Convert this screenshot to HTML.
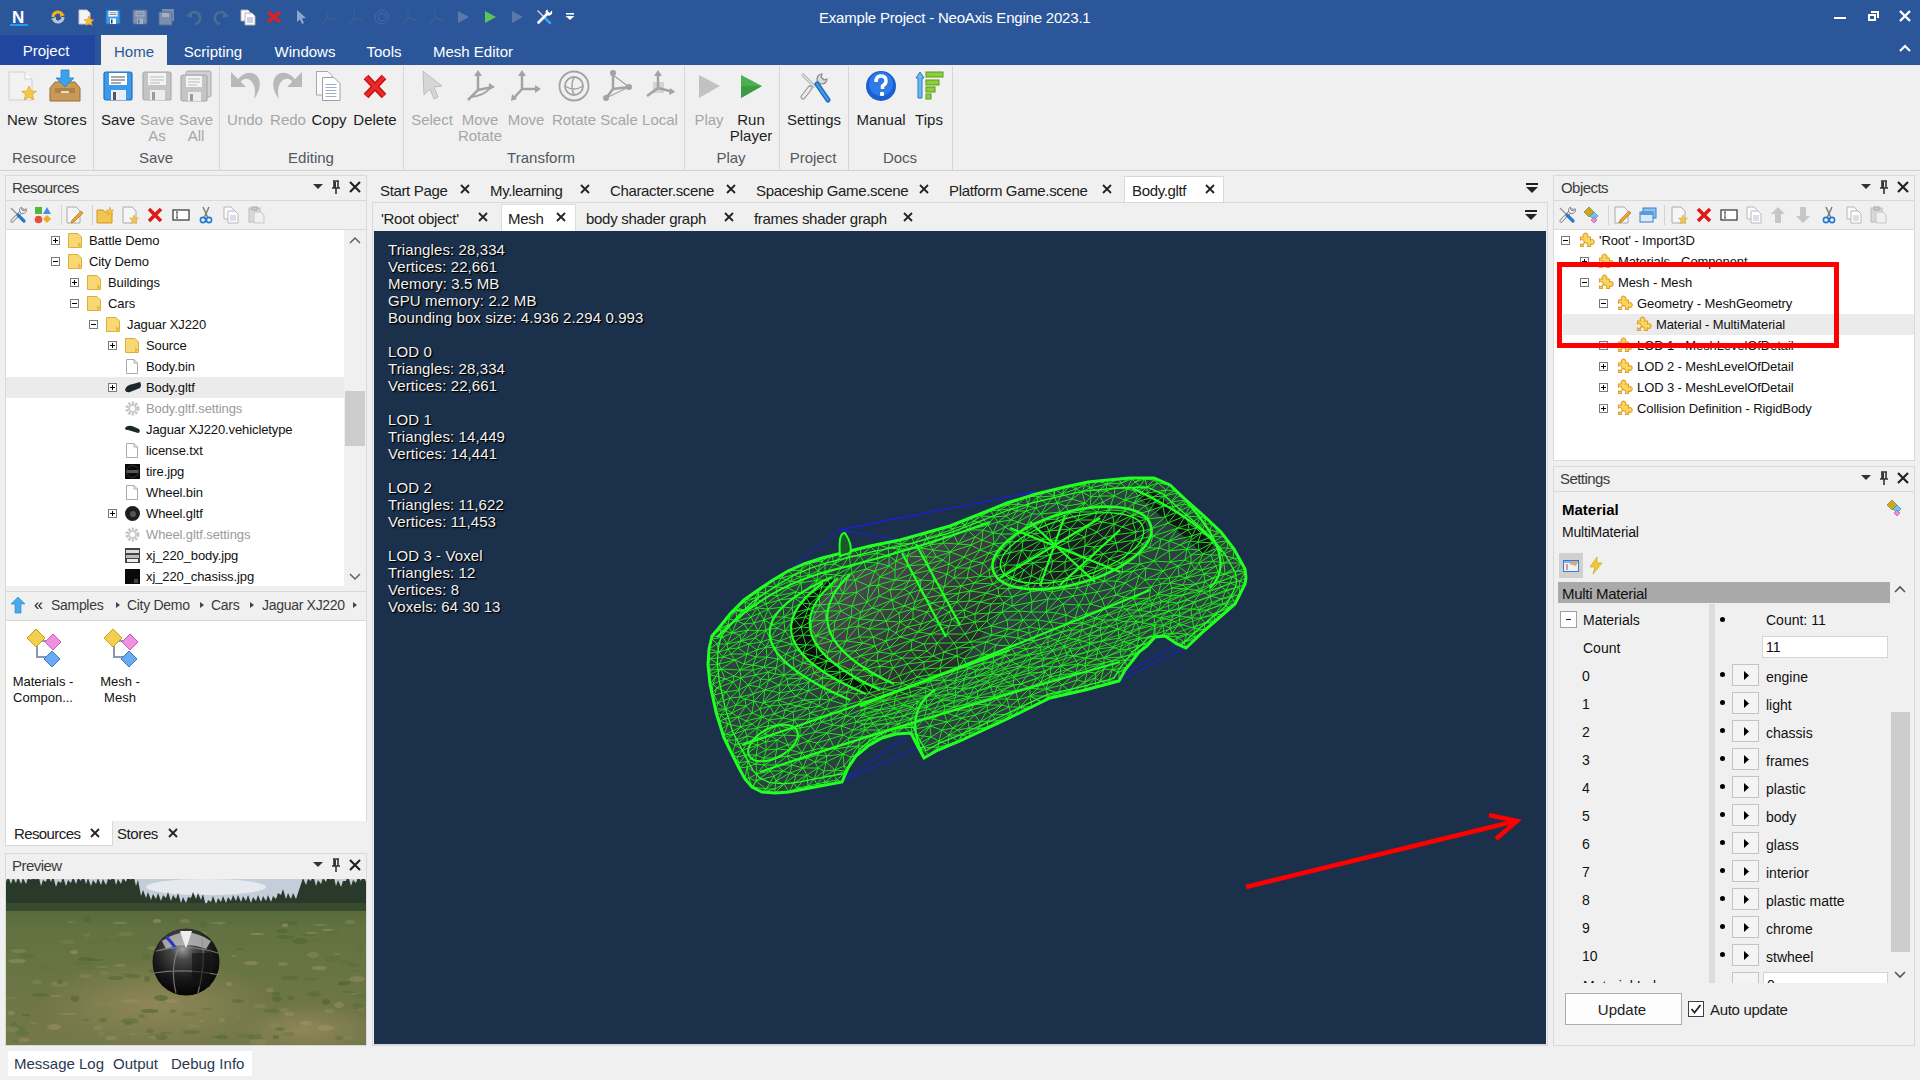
<!DOCTYPE html>
<html><head><meta charset="utf-8">
<style>
*{box-sizing:border-box;margin:0;padding:0}
html,body{width:1920px;height:1080px;overflow:hidden;background:#f0f0f0;font-family:"Liberation Sans",sans-serif;font-size:15px;color:#1e1e1e}
.a{position:absolute}
.t{position:absolute;white-space:nowrap;line-height:1}
svg{position:absolute;overflow:visible}
</style></head><body>
<div class="a" style="left:0px;top:0px;width:1920px;height:65px;background:#2b579a;"></div><div class="t" style="left:12px;top:8.5px;font-size:17px;color:#ffffff;"><b>N</b></div><div class="a" style="left:10px;top:24px;width:18px;height:2px;background:#1e9bff;"></div><svg style="left:50px;top:9px;" width="16" height="16" viewBox="0 0 16 16"><path d="M3 8 A5 5 0 0 1 12 5" stroke="#f0b020" stroke-width="3" fill="none"/><path d="M10 2 L15 6 L10 8z" fill="#f0b020"/><path d="M13 8 A5 5 0 0 1 4 11" stroke="#b8c4d0" stroke-width="3" fill="none"/><path d="M6 14 L1 10 L6 8z" fill="#b8c4d0"/></svg><svg style="left:77px;top:9px;" width="16" height="16" viewBox="0 0 16 16"><path d="M2 1 H10 L13 4 V15 H2z" fill="#f4f4f4" stroke="#c8c8c8"/><path d="M12 7 L13.5 10.5 L17 10.7 L14.3 13 L15.2 16.5 L12 14.6 L8.8 16.5 L9.7 13 L7 10.7 L10.5 10.5z" fill="#f6c23a" stroke="#e09020" stroke-width="0.6"/></svg><svg style="left:105px;top:9px;" width="16" height="16" viewBox="0 0 16 16"><rect x="1" y="1" width="14" height="14" rx="1" fill="#3f9be6" stroke="#1c70c0"/><rect x="3.5" y="2" width="9" height="5.5" fill="#fff"/><path d="M4.5 3.8H11.5M4.5 5.6H11.5" stroke="#666" stroke-width="0.8"/><rect x="5" y="9.5" width="6" height="5.5" fill="#fff"/><rect x="6" y="10.5" width="1.5" height="4" fill="#333"/></svg><svg style="left:132px;top:9px;" width="16" height="16" viewBox="0 0 16 16"><rect x="1" y="1" width="14" height="14" rx="1" fill="#7a8fb0" stroke="#5b6f90"/><rect x="3.5" y="2" width="9" height="5.5" fill="#9fb0c8"/><path d="M4.5 3.8H11.5M4.5 5.6H11.5" stroke="#6a7a98" stroke-width="0.8"/><rect x="5" y="9.5" width="6" height="5.5" fill="#9fb0c8"/><rect x="6" y="10.5" width="1.5" height="4" fill="#5b6f90"/></svg><svg style="left:159px;top:9px;" width="16" height="16" viewBox="0 0 16 16"><rect x="3" y="0" width="12" height="12" fill="#7a8fb0"/><rect x="0" y="3" width="13" height="13" rx="1" fill="#7a8fb0" stroke="#5b6f90"/><rect x="3" y="4" width="7" height="4" fill="#9fb0c8"/></svg><svg style="left:186px;top:9px;" width="16" height="16" viewBox="0 0 16 16"><path d="M3 6 A6 6 0 1 1 9 15" stroke="#4a6a98" stroke-width="2.5" fill="none"/><path d="M0 7 L6 2 L6 9z" fill="#4a6a98"/></svg><svg style="left:213px;top:9px;" width="16" height="16" viewBox="0 0 16 16"><path d="M13 6 A6 6 0 1 0 7 15" stroke="#4a6a98" stroke-width="2.5" fill="none"/><path d="M16 7 L10 2 L10 9z" fill="#4a6a98"/></svg><svg style="left:240px;top:9px;" width="16" height="16" viewBox="0 0 16 16"><path d="M1 1 H8 L10 3 V12 H1z" fill="#fff" stroke="#b0b0b0"/><path d="M5 4 H12 L15 7 V16 H5z" fill="#fff" stroke="#b0b0b0"/><path d="M7 9H13M7 11H13M7 13H13" stroke="#8aa0c0"/></svg><svg style="left:266px;top:9px;" width="16" height="16" viewBox="0 0 16 16"><path d="M2 3 L14 13 M14 3 L2 13" stroke="#e02020" stroke-width="3.5"/></svg><svg style="left:293px;top:9px;" width="16" height="16" viewBox="0 0 16 16"><path d="M4 1 L13 9 L9 9.5 L11 14 L9 15 L7 10.5 L4 13z" fill="#8fa6cc"/></svg><svg style="left:320px;top:9px;" width="16" height="16" viewBox="0 0 16 16"><path d="M7 1 V9 L2 15 M7 9 L15 11" stroke="#3c5f90" stroke-width="1.5" fill="none"/></svg><svg style="left:347px;top:9px;" width="16" height="16" viewBox="0 0 16 16"><path d="M7 1 V9 L2 15 M7 9 L15 11" stroke="#3c5f90" stroke-width="1.5" fill="none"/></svg><svg style="left:374px;top:9px;" width="16" height="16" viewBox="0 0 16 16"><circle cx="8" cy="8" r="7" stroke="#4a6a98" stroke-width="1" fill="none"/><circle cx="8" cy="8" r="4" stroke="#4a6a98" stroke-width="1" fill="none"/></svg><svg style="left:401px;top:9px;" width="16" height="16" viewBox="0 0 16 16"><path d="M7 1 V9 L2 15 M7 9 L15 11" stroke="#3c5f90" stroke-width="1.5" fill="none"/></svg><svg style="left:428px;top:9px;" width="16" height="16" viewBox="0 0 16 16"><path d="M7 1 V9 L2 15 M7 9 L15 11" stroke="#3c5f90" stroke-width="1.5" fill="none"/></svg><svg style="left:455px;top:9px;" width="16" height="16" viewBox="0 0 16 16"><path d="M3 2 L14 8 L3 14z" fill="#5a78a8"/></svg><svg style="left:482px;top:9px;" width="16" height="16" viewBox="0 0 16 16"><path d="M3 2 L14 8 L3 14z" fill="#5cc45a"/></svg><svg style="left:509px;top:9px;" width="16" height="16" viewBox="0 0 16 16"><path d="M3 2 L14 8 L3 14z" fill="#5a78a8"/></svg><svg style="left:536px;top:9px;" width="16" height="16" viewBox="0 0 16 16"><path d="M1.5 1.5 L8 8" stroke="#dde" stroke-width="1.2"/><path d="M8 8 L14 14" stroke="#3aa0f0" stroke-width="2.6" stroke-linecap="round"/><path d="M12 4 L2.5 13.5" stroke="#fff" stroke-width="2.6" stroke-linecap="round"/><path d="M15.5 1.5 A3.2 3.2 0 1 1 11.5 0.5 L12 3 L14 4z" fill="#fff"/></svg><svg style="left:562px;top:9px;" width="16" height="16" viewBox="0 0 16 16"><rect x="4" y="4" width="8" height="1.6" fill="#fff"/><path d="M3.5 7 H12.5 L8 11z" fill="#fff"/></svg><div class="t" style="left:819px;top:9.5px;font-size:15px;color:#ffffff;letter-spacing:-0.2px">Example Project - NeoAxis Engine 2023.1</div><div class="a" style="left:1834px;top:17px;width:12px;height:2px;background:#fff;"></div><div class="a" style="left:1868px;top:14px;width:8px;height:7px;border:2px solid #fff"></div><div class="a" style="left:1871px;top:11px;width:8px;height:7px;border-top:2px solid #fff;border-right:2px solid #fff"></div><svg style="left:1899px;top:10px;" width="12" height="12" viewBox="0 0 12 12"><path d="M1 1 L11 11 M11 1 L1 11" stroke="#fff" stroke-width="2.4"/></svg><svg style="left:1899px;top:44px;" width="12" height="8" viewBox="0 0 12 8"><path d="M1 7 L6 2 L11 7" stroke="#fff" stroke-width="2.2" fill="none"/></svg><div class="a" style="left:0px;top:35px;width:95px;height:30px;background:#2146a0;"></div><div class="t" style="left:46px;top:42.5px;font-size:15px;color:#ffffff;transform:translateX(-50%);">Project</div><div class="a" style="left:101px;top:35px;width:66px;height:30px;background:#f0f0f0;"></div><div class="t" style="left:134px;top:43.5px;font-size:15px;color:#2b579a;transform:translateX(-50%);">Home</div><div class="t" style="left:213px;top:43.5px;font-size:15px;color:#ffffff;transform:translateX(-50%);">Scripting</div><div class="t" style="left:305px;top:43.5px;font-size:15px;color:#ffffff;transform:translateX(-50%);">Windows</div><div class="t" style="left:384px;top:43.5px;font-size:15px;color:#ffffff;transform:translateX(-50%);">Tools</div><div class="t" style="left:473px;top:43.5px;font-size:15px;color:#ffffff;transform:translateX(-50%);">Mesh Editor</div><div class="a" style="left:0px;top:65px;width:1920px;height:105px;background:#f0f0f0;"></div><div class="a" style="left:0px;top:170px;width:1920px;height:1px;background:#d2d2d2;"></div><div class="a" style="left:93px;top:66px;width:1px;height:104px;background:#d6d6d6;"></div><div class="a" style="left:219px;top:66px;width:1px;height:104px;background:#d6d6d6;"></div><div class="a" style="left:403px;top:66px;width:1px;height:104px;background:#d6d6d6;"></div><div class="a" style="left:684px;top:66px;width:1px;height:104px;background:#d6d6d6;"></div><div class="a" style="left:779px;top:66px;width:1px;height:104px;background:#d6d6d6;"></div><div class="a" style="left:848px;top:66px;width:1px;height:104px;background:#d6d6d6;"></div><div class="a" style="left:952px;top:66px;width:1px;height:104px;background:#d6d6d6;"></div><svg style="left:6px;top:70px;" width="32" height="32" viewBox="0 0 32 32"><path d="M3 2 H19 L26 9 V30 H3z" fill="#f2f2f2" stroke="#cfcfcf"/><path d="M19 2 V9 H26" fill="#fff" stroke="#cfcfcf"/><path d="M23 16 L25.2 21 L30.5 21.3 L26.4 24.6 L27.8 30 L23 27 L18.2 30 L19.6 24.6 L15.5 21.3 L20.8 21z" fill="#f7c644" stroke="#e0a020" stroke-width="0.7"/></svg><div class="t" style="left:22px;top:112.0px;font-size:15px;color:#1e1e1e;transform:translateX(-50%);">New</div><svg style="left:49px;top:70px;" width="32" height="32" viewBox="0 0 32 32"><path d="M1 18 L6 12 H26 L31 18 V31 H1z" fill="#c89a5a" stroke="#9a6e34"/><path d="M6 18 H26 V23 H6z" fill="#b08040"/><rect x="12" y="21" width="8" height="2" fill="#e8e0d0"/><path d="M12 0 H20 V8 H25 L16 17 L7 8 H12z" fill="#3ea0e8" stroke="#2a80c8" stroke-width="0.8"/></svg><div class="t" style="left:65px;top:112.0px;font-size:15px;color:#1e1e1e;transform:translateX(-50%);">Stores</div><svg style="left:102px;top:70px;" width="32" height="32" viewBox="0 0 32 32"><rect x="2" y="2" width="28" height="28" rx="2" fill="#3c9ae8" stroke="#1d6fc4" stroke-width="1.2"/><rect x="7" y="3" width="18" height="12" fill="#fff"/><path d="M9 7H23M9 10H23M9 13H19" stroke="#555" stroke-width="1"/><rect x="9" y="20" width="15" height="10" fill="#e8eef8"/><rect x="11" y="22" width="3" height="8" fill="#555"/></svg><div class="t" style="left:118px;top:112.0px;font-size:15px;color:#1e1e1e;transform:translateX(-50%);">Save</div><svg style="left:141px;top:70px;" width="32" height="32" viewBox="0 0 32 32"><rect x="2" y="2" width="28" height="28" rx="2" fill="#c4c4c4" stroke="#aaa" stroke-width="1.2"/><rect x="7" y="3" width="18" height="12" fill="#f4f4f4"/><path d="M9 7H23M9 10H23M9 13H19" stroke="#bbb" stroke-width="1"/><rect x="9" y="20" width="15" height="10" fill="#ececec"/><rect x="11" y="22" width="3" height="8" fill="#999"/></svg><div class="t" style="left:157px;top:112.0px;font-size:15px;color:#a6a6a6;transform:translateX(-50%);">Save</div><div class="t" style="left:157px;top:128.0px;font-size:15px;color:#a6a6a6;transform:translateX(-50%);">As</div><svg style="left:180px;top:70px;" width="32" height="32" viewBox="0 0 32 32"><rect x="6" y="1" width="25" height="26" rx="2" fill="#d0d0d0" stroke="#aaa"/><rect x="1" y="5" width="26" height="26" rx="2" fill="#c4c4c4" stroke="#aaa" stroke-width="1.2"/><rect x="6" y="6" width="16" height="11" fill="#f4f4f4"/><path d="M8 9H20M8 12H20M8 15H17" stroke="#bbb" stroke-width="1"/><rect x="8" y="22" width="13" height="9" fill="#ececec"/><rect x="10" y="24" width="3" height="7" fill="#999"/></svg><div class="t" style="left:196px;top:112.0px;font-size:15px;color:#a6a6a6;transform:translateX(-50%);">Save</div><div class="t" style="left:196px;top:128.0px;font-size:15px;color:#a6a6a6;transform:translateX(-50%);">All</div><svg style="left:229px;top:70px;" width="32" height="32" viewBox="0 0 32 32"><path d="M2 2 L2 17 L17 17z" fill="#b9b9b9"/><path d="M6 14 C11 4, 21 -1, 28 6 C33 12, 31 21, 25 29 C27 21, 26 14, 21 10 C16 7, 12 9, 9.5 16z" fill="#b9b9b9"/></svg><div class="t" style="left:245px;top:112.0px;font-size:15px;color:#a6a6a6;transform:translateX(-50%);">Undo</div><svg style="left:272px;top:70px;" width="32" height="32" viewBox="0 0 32 32"><g transform="translate(32 0) scale(-1 1)"><path d="M2 2 L2 17 L17 17z" fill="#b9b9b9"/><path d="M6 14 C11 4, 21 -1, 28 6 C33 12, 31 21, 25 29 C27 21, 26 14, 21 10 C16 7, 12 9, 9.5 16z" fill="#b9b9b9"/></g></svg><div class="t" style="left:288px;top:112.0px;font-size:15px;color:#a6a6a6;transform:translateX(-50%);">Redo</div><svg style="left:313px;top:70px;" width="32" height="32" viewBox="0 0 32 32"><path d="M3.5 1.5 H15 L19 5.5 V25 H3.5z" fill="#fafafa" stroke="#a8a8a8"/><path d="M9.5 7.5 H21 L27 13.5 V30.5 H9.5z" fill="#fff" stroke="#a0a0a0"/><path d="M12.5 14.5H23.5M12.5 17.5H23.5M12.5 20.5H23.5M12.5 23.5H23.5M12.5 26.5H23.5" stroke="#9ab0cf" stroke-width="1"/></svg><div class="t" style="left:329px;top:112.0px;font-size:15px;color:#1e1e1e;transform:translateX(-50%);">Copy</div><svg style="left:359px;top:70px;" width="32" height="32" viewBox="0 0 32 32"><path d="M7 7 L25 26 M25 7 L7 26" stroke="#c81010" stroke-width="6.5"/><path d="M7 7 L25 26 M25 7 L7 26" stroke="#ea2a2a" stroke-width="3.5"/></svg><div class="t" style="left:375px;top:112.0px;font-size:15px;color:#1e1e1e;transform:translateX(-50%);">Delete</div><svg style="left:416px;top:70px;" width="32" height="32" viewBox="0 0 32 32"><path d="M7 1 L26 16 L18 17 L22 27 L18 29 L14 19 L8 25z" fill="#d6d6d6" stroke="#bdbdbd"/></svg><div class="t" style="left:432px;top:112.0px;font-size:15px;color:#a6a6a6;transform:translateX(-50%);">Select</div><svg style="left:464px;top:70px;" width="32" height="32" viewBox="0 0 32 32"><path d="M14 4 V20 L4 30 M14 20 L28 17" stroke="#a3a3a3" stroke-width="2.5" fill="none"/><path d="M10 6 L14 0 L18 6z M25 13 L31 17 L25 20z" fill="#a3a3a3"/><path d="M6 27 Q20 26 26 18" stroke="#a3a3a3" stroke-width="2" fill="none"/></svg><div class="t" style="left:480px;top:112.0px;font-size:15px;color:#a6a6a6;transform:translateX(-50%);">Move</div><div class="t" style="left:480px;top:128.0px;font-size:15px;color:#a6a6a6;transform:translateX(-50%);">Rotate</div><svg style="left:510px;top:70px;" width="32" height="32" viewBox="0 0 32 32"><path d="M12 4 V19 L3 29 M12 19 L27 19" stroke="#a3a3a3" stroke-width="2.5" fill="none"/><path d="M8 6 L12 0 L16 6z M25 15 L31 19 L25 23z M2 24 L1 31 L7 29z" fill="#a3a3a3"/></svg><div class="t" style="left:526px;top:112.0px;font-size:15px;color:#a6a6a6;transform:translateX(-50%);">Move</div><svg style="left:558px;top:70px;" width="32" height="32" viewBox="0 0 32 32"><circle cx="16" cy="16" r="14.5" stroke="#a3a3a3" stroke-width="1.8" fill="none"/><circle cx="16" cy="16" r="9" stroke="#a3a3a3" stroke-width="1.8" fill="none"/><path d="M7 16 Q16 22 25 16 M16 7 Q12 16 16 25" stroke="#a3a3a3" stroke-width="1.5" fill="none"/></svg><div class="t" style="left:574px;top:112.0px;font-size:15px;color:#a6a6a6;transform:translateX(-50%);">Rotate</div><svg style="left:603px;top:70px;" width="32" height="32" viewBox="0 0 32 32"><path d="M10 3 V19 L3 28 M10 19 L26 17 M10 5 L26 17 L3 28" stroke="#a3a3a3" stroke-width="1.2" fill="none"/><path d="M10 3 V19 L3 28 M10 19 L26 17" stroke="#a3a3a3" stroke-width="2.5" fill="none"/><circle cx="10" cy="3" r="3" fill="#a3a3a3"/><circle cx="26" cy="17" r="3" fill="#a3a3a3"/><circle cx="3" cy="28" r="3" fill="#a3a3a3"/></svg><div class="t" style="left:619px;top:112.0px;font-size:15px;color:#a6a6a6;transform:translateX(-50%);">Scale</div><svg style="left:644px;top:70px;" width="32" height="32" viewBox="0 0 32 32"><rect x="9" y="12" width="11" height="11" fill="#d4d4d4"/><path d="M14 4 V18 L3 26 M14 18 L30 22" stroke="#a3a3a3" stroke-width="2.5" fill="none"/><path d="M10 6 L14 0 L18 6z M26 18 L31 22 L25 25z" fill="#a3a3a3"/></svg><div class="t" style="left:660px;top:112.0px;font-size:15px;color:#a6a6a6;transform:translateX(-50%);">Local</div><svg style="left:693px;top:70px;" width="32" height="32" viewBox="0 0 32 32"><path d="M6 5 L27 16 L6 28z" fill="#c2c2c2"/></svg><div class="t" style="left:709px;top:112.0px;font-size:15px;color:#a6a6a6;transform:translateX(-50%);">Play</div><svg style="left:735px;top:70px;" width="32" height="32" viewBox="0 0 32 32"><path d="M6 5 L27 16 L6 28z" fill="#4caf50"/><path d="M6 16 L27 16 L6 28z" fill="#3e9a42"/></svg><div class="t" style="left:751px;top:112.0px;font-size:15px;color:#1e1e1e;transform:translateX(-50%);">Run</div><div class="t" style="left:751px;top:128.0px;font-size:15px;color:#1e1e1e;transform:translateX(-50%);">Player</div><svg style="left:798px;top:70px;" width="32" height="32" viewBox="0 0 32 32"><path d="M4 4 L17 17" stroke="#9a9a9a" stroke-width="3"/><path d="M4 4 L17 17" stroke="#e8e8e8" stroke-width="1.5"/><path d="M12 18 L5 27" stroke="#8a8a8a" stroke-width="5" stroke-linecap="round"/><path d="M12 18 L5 27" stroke="#eaeaea" stroke-width="3" stroke-linecap="round"/><path d="M24 4 A5 5 0 1 0 29 9 L26 10 L23 7z" fill="#dcdcdc" stroke="#888" stroke-width="1.2"/><path d="M19 14 L30 30" stroke="#1f6fc0" stroke-width="5" stroke-linecap="round"/><path d="M19 14 L30 30" stroke="#4aa0ec" stroke-width="2" stroke-linecap="round"/></svg><div class="t" style="left:814px;top:112.0px;font-size:15px;color:#1e1e1e;transform:translateX(-50%);">Settings</div><svg style="left:865px;top:70px;" width="32" height="32" viewBox="0 0 32 32"><circle cx="16" cy="16" r="15" fill="#1a5fd0"/><circle cx="16" cy="14" r="12" fill="#2f7ae6"/><path d="M11 12 Q11 6 16 6 Q21 6 21 11 Q21 14 17.5 16 V19" stroke="#fff" stroke-width="3.5" fill="none"/><rect x="15" y="22" width="4" height="4" rx="1" fill="#fff"/></svg><div class="t" style="left:881px;top:112.0px;font-size:15px;color:#1e1e1e;transform:translateX(-50%);">Manual</div><svg style="left:913px;top:70px;" width="32" height="32" viewBox="0 0 32 32"><path d="M3 8 L7 2 L11 8 H9 V28 H5 V8z" fill="#6cb8f0" stroke="#2a7ac0" stroke-width="1"/><rect x="13" y="2" width="17" height="5" fill="#8ccf3c" stroke="#5a9a1a"/><rect x="13" y="10" width="13" height="5" fill="#8ccf3c" stroke="#5a9a1a"/><rect x="13" y="17" width="9" height="5" fill="#8ccf3c" stroke="#5a9a1a"/><rect x="13" y="24" width="5" height="5" fill="#8ccf3c" stroke="#5a9a1a"/></svg><div class="t" style="left:929px;top:112.0px;font-size:15px;color:#1e1e1e;transform:translateX(-50%);">Tips</div><div class="t" style="left:44px;top:150.0px;font-size:15px;color:#505860;transform:translateX(-50%);">Resource</div><div class="t" style="left:156px;top:150.0px;font-size:15px;color:#505860;transform:translateX(-50%);">Save</div><div class="t" style="left:311px;top:150.0px;font-size:15px;color:#505860;transform:translateX(-50%);">Editing</div><div class="t" style="left:541px;top:150.0px;font-size:15px;color:#505860;transform:translateX(-50%);">Transform</div><div class="t" style="left:731px;top:150.0px;font-size:15px;color:#505860;transform:translateX(-50%);">Play</div><div class="t" style="left:813px;top:150.0px;font-size:15px;color:#505860;transform:translateX(-50%);">Project</div><div class="t" style="left:900px;top:150.0px;font-size:15px;color:#505860;transform:translateX(-50%);">Docs</div><div class="a" style="left:5px;top:175px;width:362px;height:646px;background:#f0f0f0;border:1px solid #d9d9d9;"></div><div class="t" style="left:12px;top:180.0px;font-size:15px;color:#3c3c3c;letter-spacing:-0.55px">Resources</div><svg style="left:313px;top:184px;" width="10" height="6" viewBox="0 0 10 6"><path d="M0 0 H10 L5 5z" fill="#333"/></svg><svg style="left:331px;top:181px;" width="10" height="13" viewBox="0 0 10 13"><path d="M2 0 H8 M3 0 V7 M7 0 V7 M1 7 H9 M5 7 V13" stroke="#333" stroke-width="1.6" fill="none"/><rect x="3" y="1" width="2" height="6" fill="#333"/></svg><svg style="left:349px;top:181px;" width="12" height="12" viewBox="0 0 12 12"><path d="M1 1 L11 11 M11 1 L1 11" stroke="#222" stroke-width="2.2"/></svg><div class="a" style="left:6px;top:200px;width:360px;height:1px;background:#d9d9d9;"></div><div class="a" style="left:6px;top:229px;width:360px;height:1px;background:#d9d9d9;"></div><svg style="left:9px;top:206px;" width="18" height="18" viewBox="0 0 18 18"><path d="M14 4 L3 15" stroke="#888" stroke-width="3.2" stroke-linecap="round"/><path d="M14 4 L3 15" stroke="#f4f4f4" stroke-width="1.6" stroke-linecap="round"/><path d="M17 2.5 A3.5 3.5 0 1 1 12.5 1 L13 4 L15.5 5z" fill="#eee" stroke="#888" stroke-width="1"/><path d="M2 2 L9 9" stroke="#999" stroke-width="1.5"/><path d="M9 9 L15 15" stroke="#2a78c8" stroke-width="3.2" stroke-linecap="round"/></svg><svg style="left:34px;top:206px;" width="18" height="18" viewBox="0 0 18 18"><rect x="1" y="1" width="7" height="7" fill="#4cbb3c"/><path d="M13 1 L17 8 H9z" fill="#4a90e2"/><circle cx="4.5" cy="13.5" r="3.8" fill="#e84c3c"/><path d="M13 9 L17 13 L13 17 L9 13z" fill="#f5a623"/></svg><svg style="left:65px;top:206px;" width="18" height="18" viewBox="0 0 18 18"><path d="M2 1 H11 L15 5 V17 H2z" fill="#f6f6f6" stroke="#aaa"/><path d="M7 14 L16 5 L18 7 L9 16 L6 17z" fill="#f0a030" stroke="#a86a10" stroke-width="0.6"/></svg><svg style="left:96px;top:206px;" width="18" height="18" viewBox="0 0 18 18"><path d="M1 4 H7 L9 6 H16 V17 H1z" fill="#f3c54e" stroke="#c99a2a"/><path d="M14 1 L15 4 L18 4 L15.5 6 L16.5 9 L14 7 L11.5 9 L12.5 6 L10 4 L13 4z" fill="#f6c64a" stroke="#d9a020" stroke-width="0.5"/></svg><svg style="left:121px;top:206px;" width="18" height="18" viewBox="0 0 18 18"><path d="M2 1 H11 L15 5 V17 H2z" fill="#f6f6f6" stroke="#aaa"/><path d="M13 9 L14.3 12 L17.5 12.2 L15 14.2 L15.8 17.5 L13 15.7 L10.2 17.5 L11 14.2 L8.5 12.2 L11.7 12z" fill="#f6c64a" stroke="#d9a020" stroke-width="0.5"/></svg><svg style="left:146px;top:206px;" width="18" height="18" viewBox="0 0 18 18"><path d="M3 3 L15 15 M15 3 L3 15" stroke="#e01818" stroke-width="3.5"/></svg><svg style="left:172px;top:206px;" width="18" height="18" viewBox="0 0 18 18"><rect x="1" y="4" width="16" height="10" fill="#fff" stroke="#333" stroke-width="1.2"/><path d="M5 6 V12 M4 6 H6 M4 12 H6" stroke="#333" stroke-width="0.9"/></svg><svg style="left:197px;top:206px;" width="18" height="18" viewBox="0 0 18 18"><path d="M6 1 L11 12 M12 1 L7 12" stroke="#777" stroke-width="1.4"/><circle cx="6" cy="14" r="2.6" fill="none" stroke="#1f7ad0" stroke-width="1.6"/><circle cx="12" cy="14" r="2.6" fill="none" stroke="#1f7ad0" stroke-width="1.6"/></svg><svg style="left:222px;top:206px;" width="18" height="18" viewBox="0 0 18 18"><path d="M2 1 H9 L12 4 V13 H2z" fill="#fafafa" stroke="#b8b8b8"/><path d="M6 5 H13 L16 8 V17 H6z" fill="#fff" stroke="#b8b8b8"/><path d="M8 10H14M8 12H14M8 14H14" stroke="#9ab0cf" stroke-width="0.8"/></svg><svg style="left:247px;top:206px;" width="18" height="18" viewBox="0 0 18 18"><rect x="2" y="2" width="11" height="14" fill="#d8d8d8" stroke="#bbb"/><rect x="5" y="1" width="5" height="3" fill="#ccc" stroke="#aaa"/><path d="M7 6 H14 L17 9 V17 H7z" fill="#f0f0f0" stroke="#c8c8c8"/></svg><div class="a" style="left:61px;top:205px;width:1px;height:20px;background:#d4d4d4;"></div><div class="a" style="left:92px;top:205px;width:1px;height:20px;background:#d4d4d4;"></div><div class="a" style="left:6px;top:230px;width:338px;height:356px;background:#ffffff;"></div><div class="a" style="left:344px;top:230px;width:22px;height:356px;background:#f0f0f0;"></div><div class="a" style="left:345px;top:391px;width:20px;height:55px;background:#cdcdcd;"></div><svg style="left:349px;top:236px;" width="12" height="8" viewBox="0 0 12 8"><path d="M1 7 L6 2 L11 7" stroke="#606060" stroke-width="1.5" fill="none"/></svg><svg style="left:349px;top:573px;" width="12" height="8" viewBox="0 0 12 8"><path d="M1 1 L6 6 L11 1" stroke="#606060" stroke-width="1.5" fill="none"/></svg><div class="a" style="left:6px;top:377px;width:338px;height:21px;background:#ebebeb;"></div><svg style="left:51px;top:236px;" width="9" height="9" viewBox="0 0 9 9"><rect x="0.5" y="0.5" width="8" height="8" fill="#fff" stroke="#7a7a7a"/><path d="M2 4.5 H7" stroke="#000"/><path d="M4.5 2 V7" stroke="#000"/></svg><svg style="left:68px;top:233px;" width="14" height="15" viewBox="0 0 14 15"><path d="M0.5 0.5 H10 L13.5 4 V14.5 H0.5z" fill="#f8d775" stroke="#dcb038"/><path d="M10 14.5 V9 L13.5 12" fill="#e8b940"/></svg><div class="t" style="left:89px;top:233.5px;font-size:13px;color:#101010;letter-spacing:-0.1px">Battle Demo</div><svg style="left:51px;top:257px;" width="9" height="9" viewBox="0 0 9 9"><rect x="0.5" y="0.5" width="8" height="8" fill="#fff" stroke="#7a7a7a"/><path d="M2 4.5 H7" stroke="#000"/></svg><svg style="left:68px;top:254px;" width="14" height="15" viewBox="0 0 14 15"><path d="M0.5 0.5 H10 L13.5 4 V14.5 H0.5z" fill="#f8d775" stroke="#dcb038"/><path d="M10 14.5 V9 L13.5 12" fill="#e8b940"/></svg><div class="t" style="left:89px;top:254.5px;font-size:13px;color:#101010;letter-spacing:-0.1px">City Demo</div><svg style="left:70px;top:278px;" width="9" height="9" viewBox="0 0 9 9"><rect x="0.5" y="0.5" width="8" height="8" fill="#fff" stroke="#7a7a7a"/><path d="M2 4.5 H7" stroke="#000"/><path d="M4.5 2 V7" stroke="#000"/></svg><svg style="left:87px;top:275px;" width="14" height="15" viewBox="0 0 14 15"><path d="M0.5 0.5 H10 L13.5 4 V14.5 H0.5z" fill="#f8d775" stroke="#dcb038"/><path d="M10 14.5 V9 L13.5 12" fill="#e8b940"/></svg><div class="t" style="left:108px;top:275.5px;font-size:13px;color:#101010;letter-spacing:-0.1px">Buildings</div><svg style="left:70px;top:299px;" width="9" height="9" viewBox="0 0 9 9"><rect x="0.5" y="0.5" width="8" height="8" fill="#fff" stroke="#7a7a7a"/><path d="M2 4.5 H7" stroke="#000"/></svg><svg style="left:87px;top:296px;" width="14" height="15" viewBox="0 0 14 15"><path d="M0.5 0.5 H10 L13.5 4 V14.5 H0.5z" fill="#f8d775" stroke="#dcb038"/><path d="M10 14.5 V9 L13.5 12" fill="#e8b940"/></svg><div class="t" style="left:108px;top:296.5px;font-size:13px;color:#101010;letter-spacing:-0.1px">Cars</div><svg style="left:89px;top:320px;" width="9" height="9" viewBox="0 0 9 9"><rect x="0.5" y="0.5" width="8" height="8" fill="#fff" stroke="#7a7a7a"/><path d="M2 4.5 H7" stroke="#000"/></svg><svg style="left:106px;top:317px;" width="14" height="15" viewBox="0 0 14 15"><path d="M0.5 0.5 H10 L13.5 4 V14.5 H0.5z" fill="#f8d775" stroke="#dcb038"/><path d="M10 14.5 V9 L13.5 12" fill="#e8b940"/></svg><div class="t" style="left:127px;top:317.5px;font-size:13px;color:#101010;letter-spacing:-0.1px">Jaguar XJ220</div><svg style="left:108px;top:341px;" width="9" height="9" viewBox="0 0 9 9"><rect x="0.5" y="0.5" width="8" height="8" fill="#fff" stroke="#7a7a7a"/><path d="M2 4.5 H7" stroke="#000"/><path d="M4.5 2 V7" stroke="#000"/></svg><svg style="left:125px;top:338px;" width="14" height="15" viewBox="0 0 14 15"><path d="M0.5 0.5 H10 L13.5 4 V14.5 H0.5z" fill="#f8d775" stroke="#dcb038"/><path d="M10 14.5 V9 L13.5 12" fill="#e8b940"/></svg><div class="t" style="left:146px;top:338.5px;font-size:13px;color:#101010;letter-spacing:-0.1px">Source</div><svg style="left:125px;top:359px;" width="15" height="15" viewBox="0 0 15 15"><path d="M1.5 0.5 H9 L12.5 4 V14.5 H1.5z" fill="#fff" stroke="#aaa"/><path d="M9 0.5 V4 H12.5" fill="none" stroke="#aaa"/></svg><div class="t" style="left:146px;top:359.5px;font-size:13px;color:#101010;letter-spacing:-0.1px">Body.bin</div><svg style="left:108px;top:383px;" width="9" height="9" viewBox="0 0 9 9"><rect x="0.5" y="0.5" width="8" height="8" fill="#fff" stroke="#7a7a7a"/><path d="M2 4.5 H7" stroke="#000"/><path d="M4.5 2 V7" stroke="#000"/></svg><svg style="left:125px;top:380px;" width="15" height="15" viewBox="0 0 15 15"><path d="M0 10 Q1 5 8 4 L15 2 Q17 5 15 8 L5 12 Q1 13 0 10z" fill="#1a2a2a"/></svg><div class="t" style="left:146px;top:380.5px;font-size:13px;color:#101010;letter-spacing:-0.1px">Body.gltf</div><svg style="left:125px;top:401px;" width="15" height="15" viewBox="0 0 15 15"><circle cx="7.5" cy="7.5" r="5.5" fill="none" stroke="#c4c4c4" stroke-width="3" stroke-dasharray="2.2 1.3"/><circle cx="7.5" cy="7.5" r="3.5" fill="none" stroke="#cdcdcd" stroke-width="2"/></svg><div class="t" style="left:146px;top:401.5px;font-size:13px;color:#9a9a9a;letter-spacing:-0.1px">Body.gltf.settings</div><svg style="left:125px;top:422px;" width="15" height="15" viewBox="0 0 15 15"><path d="M0 6 Q2 3 7 4 L14 7 Q16 10 13 11 L3 8 Q0 8 0 6z" fill="#1a2a2a"/></svg><div class="t" style="left:146px;top:422.5px;font-size:13px;color:#101010;letter-spacing:-0.1px">Jaguar XJ220.vehicletype</div><svg style="left:125px;top:443px;" width="15" height="15" viewBox="0 0 15 15"><path d="M1.5 0.5 H9 L12.5 4 V14.5 H1.5z" fill="#fff" stroke="#aaa"/><path d="M9 0.5 V4 H12.5" fill="none" stroke="#aaa"/></svg><div class="t" style="left:146px;top:443.5px;font-size:13px;color:#101010;letter-spacing:-0.1px">license.txt</div><svg style="left:125px;top:464px;" width="15" height="15" viewBox="0 0 15 15"><rect x="0" y="0" width="15" height="15" fill="#0a0a0a"/><rect x="1" y="6" width="13" height="3" fill="#555"/><circle cx="7.5" cy="7.5" r="6" fill="none" stroke="#333"/></svg><div class="t" style="left:146px;top:464.5px;font-size:13px;color:#101010;letter-spacing:-0.1px">tire.jpg</div><svg style="left:125px;top:485px;" width="15" height="15" viewBox="0 0 15 15"><path d="M1.5 0.5 H9 L12.5 4 V14.5 H1.5z" fill="#fff" stroke="#aaa"/><path d="M9 0.5 V4 H12.5" fill="none" stroke="#aaa"/></svg><div class="t" style="left:146px;top:485.5px;font-size:13px;color:#101010;letter-spacing:-0.1px">Wheel.bin</div><svg style="left:108px;top:509px;" width="9" height="9" viewBox="0 0 9 9"><rect x="0.5" y="0.5" width="8" height="8" fill="#fff" stroke="#7a7a7a"/><path d="M2 4.5 H7" stroke="#000"/><path d="M4.5 2 V7" stroke="#000"/></svg><svg style="left:125px;top:506px;" width="15" height="15" viewBox="0 0 15 15"><circle cx="7.5" cy="7.5" r="7.5" fill="#1e1e1e"/><circle cx="8" cy="8" r="3" fill="#555"/></svg><div class="t" style="left:146px;top:506.5px;font-size:13px;color:#101010;letter-spacing:-0.1px">Wheel.gltf</div><svg style="left:125px;top:527px;" width="15" height="15" viewBox="0 0 15 15"><circle cx="7.5" cy="7.5" r="5.5" fill="none" stroke="#c4c4c4" stroke-width="3" stroke-dasharray="2.2 1.3"/><circle cx="7.5" cy="7.5" r="3.5" fill="none" stroke="#cdcdcd" stroke-width="2"/></svg><div class="t" style="left:146px;top:527.5px;font-size:13px;color:#9a9a9a;letter-spacing:-0.1px">Wheel.gltf.settings</div><svg style="left:125px;top:548px;" width="15" height="15" viewBox="0 0 15 15"><rect x="0" y="0" width="15" height="15" fill="#444"/><rect x="1" y="2" width="13" height="3" fill="#ddd"/><rect x="1" y="7" width="13" height="3" fill="#bbb"/><rect x="2" y="11" width="11" height="3" fill="#eee"/></svg><div class="t" style="left:146px;top:548.5px;font-size:13px;color:#101010;letter-spacing:-0.1px">xj_220_body.jpg</div><svg style="left:125px;top:569px;" width="15" height="15" viewBox="0 0 15 15"><rect x="0" y="0" width="15" height="15" fill="#0a0a0a"/><rect x="9" y="10" width="4" height="4" fill="#444"/></svg><div class="t" style="left:146px;top:569.5px;font-size:13px;color:#101010;letter-spacing:-0.1px">xj_220_chasiss.jpg</div><div class="a" style="left:6px;top:591px;width:360px;height:1px;background:#d9d9d9;"></div><svg style="left:11px;top:597px;" width="14" height="16" viewBox="0 0 14 16"><path d="M7 0 L14 7 H10 V16 H4 V7 H0z" fill="#4aa8ec" stroke="#2a80c8" stroke-width="0.6"/></svg><div class="t" style="left:34px;top:597.0px;font-size:16px;color:#222;">&#171;</div><div class="t" style="left:51px;top:598.0px;font-size:14px;color:#3a3a3a;letter-spacing:-0.3px">Samples</div><div class="t" style="left:127px;top:598.0px;font-size:14px;color:#3a3a3a;letter-spacing:-0.3px">City Demo</div><div class="t" style="left:211px;top:598.0px;font-size:14px;color:#3a3a3a;letter-spacing:-0.3px">Cars</div><div class="t" style="left:262px;top:598.0px;font-size:14px;color:#3a3a3a;letter-spacing:-0.3px">Jaguar XJ220</div><svg style="left:116px;top:602px;" width="4" height="6" viewBox="0 0 4 6"><path d="M0 0 L4 3 L0 6z" fill="#444"/></svg><svg style="left:200px;top:602px;" width="4" height="6" viewBox="0 0 4 6"><path d="M0 0 L4 3 L0 6z" fill="#444"/></svg><svg style="left:250px;top:602px;" width="4" height="6" viewBox="0 0 4 6"><path d="M0 0 L4 3 L0 6z" fill="#444"/></svg><svg style="left:353px;top:602px;" width="4" height="6" viewBox="0 0 4 6"><path d="M0 0 L4 3 L0 6z" fill="#444"/></svg><div class="a" style="left:6px;top:620px;width:360px;height:1px;background:#d9d9d9;"></div><div class="a" style="left:6px;top:621px;width:360px;height:200px;background:#ffffff;"></div><svg style="left:26px;top:629px;" width="36" height="38" viewBox="0 0 36 38"><path d="M11 11 V28 H24 M11 12 H23" stroke="#8a98b0" stroke-width="2" fill="none"/><path d="M10 0 L19 9 L10 18 L1 9z" fill="#f2cf50" stroke="#c9a020"/><path d="M27 5 L35 13 L27 21 L19 13z" fill="#f090e0" stroke="#c060b0"/><path d="M26 22 L34 30 L26 38 L18 30z" fill="#6aaaf0" stroke="#3a7ac0"/></svg><svg style="left:103px;top:629px;" width="36" height="38" viewBox="0 0 36 38"><path d="M11 11 V28 H24 M11 12 H23" stroke="#8a98b0" stroke-width="2" fill="none"/><path d="M10 0 L19 9 L10 18 L1 9z" fill="#f2cf50" stroke="#c9a020"/><path d="M27 5 L35 13 L27 21 L19 13z" fill="#f090e0" stroke="#c060b0"/><path d="M26 22 L34 30 L26 38 L18 30z" fill="#6aaaf0" stroke="#3a7ac0"/></svg><div class="t" style="left:43px;top:674.5px;font-size:13px;color:#101010;transform:translateX(-50%);">Materials -</div><div class="t" style="left:43px;top:690.5px;font-size:13px;color:#101010;transform:translateX(-50%);">Compon...</div><div class="t" style="left:120px;top:674.5px;font-size:13px;color:#101010;transform:translateX(-50%);">Mesh -</div><div class="t" style="left:120px;top:690.5px;font-size:13px;color:#101010;transform:translateX(-50%);">Mesh</div><div class="a" style="left:5px;top:821px;width:108px;height:25px;background:#ffffff;border:1px solid #d9d9d9;border-top:none"></div><div class="t" style="left:14px;top:825.5px;font-size:15px;color:#202020;letter-spacing:-0.6px">Resources</div><svg style="left:90px;top:828px;" width="10" height="10" viewBox="0 0 10 10"><path d="M1 1 L9 9 M9 1 L1 9" stroke="#222" stroke-width="1.8"/></svg><div class="t" style="left:117px;top:825.5px;font-size:15px;color:#202020;letter-spacing:-0.4px">Stores</div><svg style="left:168px;top:828px;" width="10" height="10" viewBox="0 0 10 10"><path d="M1 1 L9 9 M9 1 L1 9" stroke="#222" stroke-width="1.8"/></svg><div class="a" style="left:5px;top:853px;width:362px;height:193px;background:#f0f0f0;border:1px solid #d9d9d9;"></div><div class="t" style="left:12px;top:858.0px;font-size:15px;color:#3c3c3c;letter-spacing:-0.55px">Preview</div><svg style="left:313px;top:862px;" width="10" height="6" viewBox="0 0 10 6"><path d="M0 0 H10 L5 5z" fill="#333"/></svg><svg style="left:331px;top:859px;" width="10" height="13" viewBox="0 0 10 13"><path d="M2 0 H8 M3 0 V7 M7 0 V7 M1 7 H9 M5 7 V13" stroke="#333" stroke-width="1.6" fill="none"/><rect x="3" y="1" width="2" height="6" fill="#333"/></svg><svg style="left:349px;top:859px;" width="12" height="12" viewBox="0 0 12 12"><path d="M1 1 L11 11 M11 1 L1 11" stroke="#222" stroke-width="2.2"/></svg><svg style="left:6px;top:879px;overflow:hidden" width="360" height="166" viewBox="0 0 360 166">
<defs><linearGradient id="grass" x1="0" y1="0" x2="0" y2="1"><stop offset="0" stop-color="#4a5e34"/><stop offset="0.3" stop-color="#627240"/><stop offset="1" stop-color="#75784a"/></linearGradient>
<radialGradient id="patch" cx="0.5" cy="0.5" r="0.5"><stop offset="0" stop-color="#978a5c" stop-opacity="0.8"/><stop offset="1" stop-color="#978a5c" stop-opacity="0"/></radialGradient>
<radialGradient id="ball" cx="0.45" cy="0.3" r="0.75"><stop offset="0" stop-color="#a0a0a0"/><stop offset="0.22" stop-color="#4a4a4a"/><stop offset="0.6" stop-color="#181818"/><stop offset="1" stop-color="#000"/></radialGradient></defs>
<rect x="0" y="0" width="360" height="166" fill="url(#grass)"/>
<ellipse cx="150" cy="125" rx="120" ry="45" fill="url(#patch)"/>
<ellipse cx="300" cy="150" rx="70" ry="25" fill="url(#patch)"/>
<ellipse cx="314" cy="46" rx="7" ry="1" fill="#8a8a58" opacity="0.47"/><ellipse cx="332" cy="75" rx="4" ry="1" fill="#a09468" opacity="0.32"/><ellipse cx="216" cy="44" rx="4" ry="2" fill="#8a8a58" opacity="0.35"/><ellipse cx="15" cy="149" rx="5" ry="3" fill="#56703a" opacity="0.41"/><ellipse cx="313" cy="89" rx="8" ry="2" fill="#a09468" opacity="0.49"/><ellipse cx="339" cy="104" rx="6" ry="2" fill="#4c6430" opacity="0.58"/><ellipse cx="157" cy="73" rx="5" ry="2" fill="#56703a" opacity="0.60"/><ellipse cx="113" cy="87" rx="7" ry="1" fill="#8a8a58" opacity="0.44"/><ellipse cx="245" cy="84" rx="7" ry="2" fill="#a09468" opacity="0.48"/><ellipse cx="344" cy="43" rx="5" ry="2" fill="#8a8a58" opacity="0.48"/><ellipse cx="115" cy="86" rx="5" ry="2" fill="#8a8a58" opacity="0.39"/><ellipse cx="136" cy="137" rx="3" ry="2" fill="#4c6430" opacity="0.39"/><ellipse cx="80" cy="141" rx="4" ry="1" fill="#56703a" opacity="0.49"/><ellipse cx="35" cy="116" rx="9" ry="2" fill="#4c6430" opacity="0.43"/><ellipse cx="308" cy="61" rx="5" ry="2" fill="#56703a" opacity="0.38"/><ellipse cx="283" cy="44" rx="9" ry="2" fill="#4c6430" opacity="0.56"/><ellipse cx="122" cy="144" rx="4" ry="2" fill="#4c6430" opacity="0.43"/><ellipse cx="187" cy="147" rx="6" ry="2" fill="#8a8a58" opacity="0.43"/><ellipse cx="147" cy="156" rx="4" ry="1" fill="#56703a" opacity="0.47"/><ellipse cx="355" cy="130" rx="3" ry="2" fill="#8a8a58" opacity="0.46"/><ellipse cx="320" cy="149" rx="8" ry="3" fill="#a09468" opacity="0.54"/><ellipse cx="16" cy="154" rx="7" ry="3" fill="#56703a" opacity="0.47"/><ellipse cx="5" cy="134" rx="4" ry="2" fill="#a09468" opacity="0.46"/><ellipse cx="149" cy="158" rx="7" ry="2" fill="#8a8a58" opacity="0.59"/><ellipse cx="195" cy="142" rx="3" ry="1" fill="#a09468" opacity="0.46"/><ellipse cx="294" cy="62" rx="8" ry="3" fill="#4c6430" opacity="0.55"/><ellipse cx="3" cy="119" rx="8" ry="1" fill="#8a8a58" opacity="0.37"/><ellipse cx="223" cy="105" rx="3" ry="2" fill="#a09468" opacity="0.56"/><ellipse cx="279" cy="46" rx="3" ry="2" fill="#a09468" opacity="0.56"/><ellipse cx="31" cy="103" rx="5" ry="2" fill="#8a8a58" opacity="0.42"/><ellipse cx="140" cy="78" rx="5" ry="3" fill="#56703a" opacity="0.34"/><ellipse cx="200" cy="130" rx="5" ry="1" fill="#4c6430" opacity="0.31"/><ellipse cx="166" cy="122" rx="6" ry="2" fill="#a09468" opacity="0.49"/><ellipse cx="155" cy="87" rx="6" ry="2" fill="#56703a" opacity="0.59"/><ellipse cx="151" cy="42" rx="4" ry="2" fill="#a09468" opacity="0.54"/><ellipse cx="81" cy="56" rx="3" ry="2" fill="#8a8a58" opacity="0.34"/><ellipse cx="249" cy="158" rx="7" ry="3" fill="#56703a" opacity="0.50"/><ellipse cx="264" cy="111" rx="4" ry="2" fill="#a09468" opacity="0.44"/><ellipse cx="85" cy="89" rx="6" ry="2" fill="#56703a" opacity="0.35"/><ellipse cx="8" cy="146" rx="4" ry="3" fill="#56703a" opacity="0.55"/><ellipse cx="343" cy="113" rx="8" ry="1" fill="#4c6430" opacity="0.33"/><ellipse cx="270" cy="158" rx="3" ry="2" fill="#4c6430" opacity="0.55"/><ellipse cx="87" cy="63" rx="4" ry="2" fill="#56703a" opacity="0.38"/><ellipse cx="216" cy="158" rx="6" ry="3" fill="#56703a" opacity="0.45"/><ellipse cx="350" cy="92" rx="7" ry="1" fill="#56703a" opacity="0.35"/><ellipse cx="144" cy="152" rx="4" ry="2" fill="#56703a" opacity="0.57"/><ellipse cx="186" cy="96" rx="7" ry="1" fill="#8a8a58" opacity="0.53"/><ellipse cx="53" cy="105" rx="9" ry="3" fill="#8a8a58" opacity="0.50"/><ellipse cx="308" cy="115" rx="7" ry="3" fill="#4c6430" opacity="0.39"/><ellipse cx="97" cy="141" rx="4" ry="2" fill="#4c6430" opacity="0.40"/><ellipse cx="279" cy="58" rx="9" ry="2" fill="#4c6430" opacity="0.44"/><ellipse cx="300" cy="144" rx="6" ry="2" fill="#a09468" opacity="0.56"/><ellipse cx="144" cy="132" rx="9" ry="2" fill="#4c6430" opacity="0.57"/><ellipse cx="233" cy="138" rx="3" ry="1" fill="#8a8a58" opacity="0.37"/><ellipse cx="68" cy="73" rx="4" ry="2" fill="#a09468" opacity="0.57"/><ellipse cx="92" cy="149" rx="5" ry="2" fill="#a09468" opacity="0.34"/><ellipse cx="95" cy="155" rx="3" ry="2" fill="#8a8a58" opacity="0.30"/><ellipse cx="121" cy="95" rx="6" ry="1" fill="#56703a" opacity="0.42"/><ellipse cx="196" cy="55" rx="5" ry="2" fill="#a09468" opacity="0.43"/><ellipse cx="190" cy="72" rx="6" ry="2" fill="#8a8a58" opacity="0.53"/><ellipse cx="106" cy="125" rx="7" ry="3" fill="#8a8a58" opacity="0.33"/><ellipse cx="340" cy="83" rx="6" ry="2" fill="#56703a" opacity="0.45"/><ellipse cx="21" cy="77" rx="7" ry="2" fill="#4c6430" opacity="0.35"/><ellipse cx="320" cy="123" rx="4" ry="3" fill="#4c6430" opacity="0.58"/><ellipse cx="232" cy="122" rx="6" ry="2" fill="#4c6430" opacity="0.44"/><ellipse cx="112" cy="62" rx="3" ry="2" fill="#56703a" opacity="0.41"/><ellipse cx="96" cy="88" rx="8" ry="1" fill="#8a8a58" opacity="0.37"/><ellipse cx="277" cy="85" rx="5" ry="2" fill="#a09468" opacity="0.41"/><ellipse cx="305" cy="54" rx="5" ry="1" fill="#a09468" opacity="0.47"/><ellipse cx="328" cy="54" rx="7" ry="2" fill="#56703a" opacity="0.54"/><ellipse cx="270" cy="115" rx="4" ry="2" fill="#4c6430" opacity="0.46"/><ellipse cx="61" cy="63" rx="8" ry="2" fill="#8a8a58" opacity="0.31"/><ellipse cx="289" cy="152" rx="9" ry="2" fill="#8a8a58" opacity="0.49"/><ellipse cx="352" cy="127" rx="5" ry="3" fill="#56703a" opacity="0.31"/><ellipse cx="69" cy="120" rx="4" ry="3" fill="#4c6430" opacity="0.45"/><ellipse cx="189" cy="98" rx="4" ry="2" fill="#a09468" opacity="0.54"/><ellipse cx="333" cy="159" rx="4" ry="2" fill="#4c6430" opacity="0.34"/><ellipse cx="285" cy="119" rx="3" ry="2" fill="#4c6430" opacity="0.45"/><ellipse cx="179" cy="42" rx="5" ry="2" fill="#8a8a58" opacity="0.51"/><ellipse cx="48" cy="148" rx="7" ry="3" fill="#a09468" opacity="0.52"/><ellipse cx="124" cy="142" rx="9" ry="3" fill="#56703a" opacity="0.51"/><ellipse cx="80" cy="80" rx="8" ry="2" fill="#4c6430" opacity="0.51"/><ellipse cx="141" cy="100" rx="3" ry="3" fill="#4c6430" opacity="0.49"/><ellipse cx="110" cy="99" rx="8" ry="2" fill="#4c6430" opacity="0.44"/><ellipse cx="13" cy="72" rx="8" ry="2" fill="#8a8a58" opacity="0.48"/><ellipse cx="81" cy="40" rx="4" ry="3" fill="#4c6430" opacity="0.56"/><ellipse cx="192" cy="60" rx="3" ry="2" fill="#4c6430" opacity="0.49"/><ellipse cx="50" cy="117" rx="6" ry="1" fill="#a09468" opacity="0.42"/><ellipse cx="114" cy="44" rx="7" ry="1" fill="#a09468" opacity="0.42"/><ellipse cx="10" cy="162" rx="4" ry="1" fill="#56703a" opacity="0.36"/><ellipse cx="120" cy="55" rx="8" ry="2" fill="#8a8a58" opacity="0.38"/><ellipse cx="284" cy="99" rx="9" ry="2" fill="#4c6430" opacity="0.47"/><ellipse cx="11" cy="82" rx="9" ry="2" fill="#a09468" opacity="0.50"/><ellipse cx="349" cy="115" rx="3" ry="1" fill="#a09468" opacity="0.31"/><ellipse cx="181" cy="101" rx="4" ry="2" fill="#8a8a58" opacity="0.36"/><ellipse cx="351" cy="100" rx="8" ry="3" fill="#a09468" opacity="0.41"/><ellipse cx="271" cy="120" rx="5" ry="3" fill="#4c6430" opacity="0.55"/><ellipse cx="41" cy="89" rx="5" ry="2" fill="#56703a" opacity="0.35"/><ellipse cx="266" cy="132" rx="8" ry="2" fill="#4c6430" opacity="0.41"/><ellipse cx="149" cy="69" rx="8" ry="2" fill="#8a8a58" opacity="0.55"/><ellipse cx="183" cy="135" rx="8" ry="2" fill="#56703a" opacity="0.31"/><ellipse cx="62" cy="135" rx="8" ry="1" fill="#a09468" opacity="0.40"/><ellipse cx="216" cy="141" rx="3" ry="2" fill="#a09468" opacity="0.43"/><ellipse cx="323" cy="132" rx="5" ry="2" fill="#a09468" opacity="0.36"/><ellipse cx="283" cy="155" rx="5" ry="2" fill="#56703a" opacity="0.32"/><ellipse cx="234" cy="70" rx="3" ry="1" fill="#4c6430" opacity="0.48"/><ellipse cx="4" cy="69" rx="9" ry="1" fill="#56703a" opacity="0.45"/><ellipse cx="327" cy="80" rx="8" ry="3" fill="#56703a" opacity="0.35"/><ellipse cx="28" cy="144" rx="4" ry="1" fill="#a09468" opacity="0.36"/><ellipse cx="322" cy="51" rx="6" ry="1" fill="#a09468" opacity="0.49"/><ellipse cx="274" cy="150" rx="5" ry="2" fill="#56703a" opacity="0.53"/><ellipse cx="105" cy="159" rx="6" ry="2" fill="#a09468" opacity="0.46"/><ellipse cx="167" cy="132" rx="3" ry="2" fill="#56703a" opacity="0.53"/><ellipse cx="333" cy="126" rx="5" ry="3" fill="#a09468" opacity="0.48"/><ellipse cx="77" cy="84" rx="9" ry="2" fill="#56703a" opacity="0.43"/><ellipse cx="90" cy="81" rx="7" ry="1" fill="#4c6430" opacity="0.56"/><ellipse cx="355" cy="117" rx="9" ry="2" fill="#56703a" opacity="0.41"/><ellipse cx="69" cy="119" rx="5" ry="3" fill="#56703a" opacity="0.44"/><ellipse cx="212" cy="44" rx="9" ry="1" fill="#a09468" opacity="0.31"/><ellipse cx="54" cy="103" rx="3" ry="2" fill="#4c6430" opacity="0.52"/><ellipse cx="99" cy="94" rx="5" ry="2" fill="#8a8a58" opacity="0.34"/><ellipse cx="160" cy="154" rx="6" ry="1" fill="#56703a" opacity="0.53"/><ellipse cx="252" cy="163" rx="9" ry="3" fill="#8a8a58" opacity="0.58"/><ellipse cx="155" cy="158" rx="6" ry="3" fill="#4c6430" opacity="0.41"/><ellipse cx="307" cy="76" rx="6" ry="3" fill="#8a8a58" opacity="0.52"/><ellipse cx="335" cy="105" rx="3" ry="2" fill="#4c6430" opacity="0.46"/><ellipse cx="60" cy="46" rx="4" ry="3" fill="#56703a" opacity="0.41"/><ellipse cx="348" cy="86" rx="6" ry="2" fill="#4c6430" opacity="0.30"/><ellipse cx="156" cy="83" rx="3" ry="2" fill="#a09468" opacity="0.44"/><ellipse cx="94" cy="125" rx="6" ry="2" fill="#8a8a58" opacity="0.31"/><ellipse cx="155" cy="119" rx="7" ry="3" fill="#4c6430" opacity="0.59"/><ellipse cx="268" cy="146" rx="5" ry="3" fill="#8a8a58" opacity="0.47"/><ellipse cx="101" cy="61" rx="3" ry="2" fill="#56703a" opacity="0.44"/><ellipse cx="240" cy="157" rx="8" ry="2" fill="#56703a" opacity="0.41"/><ellipse cx="228" cy="77" rx="3" ry="1" fill="#a09468" opacity="0.42"/><ellipse cx="127" cy="97" rx="8" ry="2" fill="#4c6430" opacity="0.47"/><ellipse cx="50" cy="45" rx="6" ry="1" fill="#56703a" opacity="0.58"/><ellipse cx="220" cy="44" rx="6" ry="2" fill="#56703a" opacity="0.34"/><ellipse cx="283" cy="135" rx="5" ry="2" fill="#a09468" opacity="0.41"/><ellipse cx="185" cy="153" rx="9" ry="2" fill="#4c6430" opacity="0.39"/><ellipse cx="124" cy="122" rx="9" ry="2" fill="#a09468" opacity="0.38"/><ellipse cx="342" cy="159" rx="5" ry="2" fill="#8a8a58" opacity="0.31"/><ellipse cx="150" cy="92" rx="8" ry="2" fill="#4c6430" opacity="0.52"/><ellipse cx="251" cy="55" rx="7" ry="1" fill="#a09468" opacity="0.58"/><ellipse cx="351" cy="127" rx="6" ry="3" fill="#56703a" opacity="0.38"/><ellipse cx="197" cy="46" rx="4" ry="3" fill="#4c6430" opacity="0.34"/><ellipse cx="254" cy="127" rx="6" ry="2" fill="#a09468" opacity="0.34"/><ellipse cx="20" cy="136" rx="4" ry="1" fill="#4c6430" opacity="0.56"/><ellipse cx="18" cy="161" rx="6" ry="2" fill="#a09468" opacity="0.43"/><ellipse cx="65" cy="43" rx="4" ry="1" fill="#8a8a58" opacity="0.34"/><ellipse cx="127" cy="155" rx="3" ry="1" fill="#8a8a58" opacity="0.60"/><ellipse cx="353" cy="71" rx="5" ry="3" fill="#56703a" opacity="0.33"/><ellipse cx="305" cy="100" rx="7" ry="2" fill="#56703a" opacity="0.47"/><ellipse cx="167" cy="108" rx="6" ry="2" fill="#56703a" opacity="0.36"/><ellipse cx="214" cy="158" rx="8" ry="1" fill="#4c6430" opacity="0.40"/><ellipse cx="302" cy="56" rx="7" ry="1" fill="#4c6430" opacity="0.33"/><ellipse cx="5" cy="150" rx="8" ry="3" fill="#8a8a58" opacity="0.46"/><ellipse cx="276" cy="52" rx="6" ry="2" fill="#4c6430" opacity="0.48"/><ellipse cx="79" cy="97" rx="6" ry="2" fill="#8a8a58" opacity="0.51"/><ellipse cx="278" cy="131" rx="5" ry="2" fill="#8a8a58" opacity="0.39"/>
<rect x="0" y="0" width="360" height="30" fill="#c4ceda"/>
<ellipse cx="200" cy="8" rx="60" ry="8" fill="#e6eaee"/>
<polygon points="0,32 0,3 2,-3 5,5 7,-1 10,4 12,-2 15,5 17,-1 20,5 22,-1 25,1 27,-5 30,1 32,-5 35,7 37,1 40,3 42,-3 45,3 47,-3 50,8 52,2 55,4 57,-2 60,7 62,1 65,4 67,-2 70,5 72,-1 75,2 77,-4 80,5 82,-1 85,7 87,1 90,5 92,-1 95,6 97,0 100,6 102,-0 105,1 107,-5 110,6 112,0 115,5 117,-1 120,3 122,-3 125,1 127,-5 130,7 132,1 135,17 137,11 140,19 142,13 145,21 147,15 150,20 152,14 155,22 157,16 160,19 162,13 165,22 167,16 170,20 172,14 175,24 177,18 180,24 182,18 185,19 187,13 190,20 192,14 195,21 197,15 200,27 202,21 205,23 207,17 210,25 212,19 215,23 217,17 220,24 222,18 225,22 227,16 230,22 232,16 235,23 237,17 240,22 242,16 245,24 247,18 250,22 252,16 255,23 257,17 260,22 262,16 265,23 267,17 270,20 272,14 275,16 277,10 280,20 282,14 285,20 287,14 290,20 292,14 295,5 297,-1 300,6 302,-0 305,2 307,-4 310,7 312,1 315,5 317,-1 320,3 322,-3 325,1 327,-5 330,7 332,1 335,8 337,2 340,2 342,-4 345,7 347,1 350,4 352,-2 355,2 357,-4 360,3 362,-3 365,6 367,0 366,32" fill="#29392a"/>
<rect x="0" y="24" width="360" height="8" fill="#3a4c2e" opacity="0.9"/>
<circle cx="180" cy="83" r="33.5" fill="url(#ball)"/>
<path d="M156 62 Q180 45 205 62 L200 70 Q180 62 160 70z" fill="#b8b8b8" opacity="0.85"/>
<path d="M174 52 L180 70 L186 52z" fill="#eeeeee"/>
<path d="M160 58 Q165 62 170 70" stroke="#2a3ac0" stroke-width="3" fill="none"/>
<path d="M150 72 Q180 64 212 74 M148 94 Q180 89 213 96 M172 70 Q164 90 170 114 M196 60 Q200 85 192 114" stroke="#8a8a8a" stroke-width="1.2" fill="none" opacity="0.8"/>
<rect x="186" y="74" width="18" height="34" fill="#111" opacity="0.6"/>
</svg><div class="a" style="left:8px;top:1051px;width:244px;height:25px;background:#ffffff;"></div><div class="t" style="left:14px;top:1055.5px;font-size:15px;color:#2a3a50;">Message Log</div><div class="t" style="left:113px;top:1055.5px;font-size:15px;color:#2a3a50;">Output</div><div class="t" style="left:171px;top:1055.5px;font-size:15px;color:#2a3a50;">Debug Info</div><div class="a" style="left:1124px;top:176px;width:100px;height:27px;background:#ffffff;border:1px solid #d9d9d9;border-bottom:none"></div><div class="t" style="left:380px;top:182.5px;font-size:15px;color:#202020;letter-spacing:-0.35px">Start Page</div><svg style="left:460.0px;top:184.0px;" width="10" height="10" viewBox="0 0 10 10"><path d="M1 1 L9 9 M9 1 L1 9" stroke="#222" stroke-width="1.8"/></svg><div class="t" style="left:490px;top:182.5px;font-size:15px;color:#202020;letter-spacing:-0.35px">My.learning</div><svg style="left:580.0px;top:184.0px;" width="10" height="10" viewBox="0 0 10 10"><path d="M1 1 L9 9 M9 1 L1 9" stroke="#222" stroke-width="1.8"/></svg><div class="t" style="left:610px;top:182.5px;font-size:15px;color:#202020;letter-spacing:-0.35px">Character.scene</div><svg style="left:726.0px;top:184.0px;" width="10" height="10" viewBox="0 0 10 10"><path d="M1 1 L9 9 M9 1 L1 9" stroke="#222" stroke-width="1.8"/></svg><div class="t" style="left:756px;top:182.5px;font-size:15px;color:#202020;letter-spacing:-0.35px">Spaceship Game.scene</div><svg style="left:919.0px;top:184.0px;" width="10" height="10" viewBox="0 0 10 10"><path d="M1 1 L9 9 M9 1 L1 9" stroke="#222" stroke-width="1.8"/></svg><div class="t" style="left:949px;top:182.5px;font-size:15px;color:#202020;letter-spacing:-0.35px">Platform Game.scene</div><svg style="left:1102.0px;top:184.0px;" width="10" height="10" viewBox="0 0 10 10"><path d="M1 1 L9 9 M9 1 L1 9" stroke="#222" stroke-width="1.8"/></svg><div class="t" style="left:1132px;top:182.5px;font-size:15px;color:#202020;letter-spacing:-0.35px">Body.gltf</div><svg style="left:1205.0px;top:184.0px;" width="10" height="10" viewBox="0 0 10 10"><path d="M1 1 L9 9 M9 1 L1 9" stroke="#222" stroke-width="1.8"/></svg><div class="a" style="left:372px;top:202px;width:1176px;height:843px;background:#f0f0f0;border:1px solid #d9d9d9;"></div><div class="a" style="left:501px;top:204px;width:75px;height:27px;background:#ffffff;border:1px solid #dcdcdc;border-bottom:none"></div><div class="t" style="left:381px;top:210.5px;font-size:15px;color:#202020;letter-spacing:-0.3px">'Root object'</div><svg style="left:478.0px;top:212.0px;" width="10" height="10" viewBox="0 0 10 10"><path d="M1 1 L9 9 M9 1 L1 9" stroke="#222" stroke-width="1.8"/></svg><div class="t" style="left:508px;top:210.5px;font-size:15px;color:#202020;letter-spacing:-0.3px">Mesh</div><svg style="left:556.0px;top:212.0px;" width="10" height="10" viewBox="0 0 10 10"><path d="M1 1 L9 9 M9 1 L1 9" stroke="#222" stroke-width="1.8"/></svg><div class="t" style="left:586px;top:210.5px;font-size:15px;color:#202020;letter-spacing:-0.3px">body shader graph</div><svg style="left:724.0px;top:212.0px;" width="10" height="10" viewBox="0 0 10 10"><path d="M1 1 L9 9 M9 1 L1 9" stroke="#222" stroke-width="1.8"/></svg><div class="t" style="left:754px;top:210.5px;font-size:15px;color:#202020;letter-spacing:-0.3px">frames shader graph</div><svg style="left:903.0px;top:212.0px;" width="10" height="10" viewBox="0 0 10 10"><path d="M1 1 L9 9 M9 1 L1 9" stroke="#222" stroke-width="1.8"/></svg><svg style="left:1526px;top:183px;" width="12" height="11" viewBox="0 0 12 11"><rect x="0" y="0" width="12" height="2" fill="#222"/><path d="M0 4 H12 L6 10z" fill="#222"/></svg><svg style="left:1525px;top:210px;" width="12" height="11" viewBox="0 0 12 11"><rect x="0" y="0" width="12" height="2" fill="#222"/><path d="M0 4 H12 L6 10z" fill="#222"/></svg><div class="a" style="left:374px;top:231px;width:1172px;height:813px;background:#1a304b;"></div><div class="a" style="left:372px;top:1044px;width:1176px;height:2px;background:#d8d8d8;"></div><div class="t" style="left:388px;top:241.5px;font-size:15px;color:#f2f2f2;letter-spacing:0.1px;text-shadow:1px 1px 0 #000,1px 1px 2px #000">Triangles: 28,334</div><div class="t" style="left:388px;top:258.5px;font-size:15px;color:#f2f2f2;letter-spacing:0.1px;text-shadow:1px 1px 0 #000,1px 1px 2px #000">Vertices: 22,661</div><div class="t" style="left:388px;top:275.5px;font-size:15px;color:#f2f2f2;letter-spacing:0.1px;text-shadow:1px 1px 0 #000,1px 1px 2px #000">Memory: 3.5 MB</div><div class="t" style="left:388px;top:292.5px;font-size:15px;color:#f2f2f2;letter-spacing:0.1px;text-shadow:1px 1px 0 #000,1px 1px 2px #000">GPU memory: 2.2 MB</div><div class="t" style="left:388px;top:309.5px;font-size:15px;color:#f2f2f2;letter-spacing:0.1px;text-shadow:1px 1px 0 #000,1px 1px 2px #000">Bounding box size: 4.936 2.294 0.993</div><div class="t" style="left:388px;top:343.5px;font-size:15px;color:#f2f2f2;letter-spacing:0.1px;text-shadow:1px 1px 0 #000,1px 1px 2px #000">LOD 0</div><div class="t" style="left:388px;top:360.5px;font-size:15px;color:#f2f2f2;letter-spacing:0.1px;text-shadow:1px 1px 0 #000,1px 1px 2px #000">Triangles: 28,334</div><div class="t" style="left:388px;top:377.5px;font-size:15px;color:#f2f2f2;letter-spacing:0.1px;text-shadow:1px 1px 0 #000,1px 1px 2px #000">Vertices: 22,661</div><div class="t" style="left:388px;top:411.5px;font-size:15px;color:#f2f2f2;letter-spacing:0.1px;text-shadow:1px 1px 0 #000,1px 1px 2px #000">LOD 1</div><div class="t" style="left:388px;top:428.5px;font-size:15px;color:#f2f2f2;letter-spacing:0.1px;text-shadow:1px 1px 0 #000,1px 1px 2px #000">Triangles: 14,449</div><div class="t" style="left:388px;top:445.5px;font-size:15px;color:#f2f2f2;letter-spacing:0.1px;text-shadow:1px 1px 0 #000,1px 1px 2px #000">Vertices: 14,441</div><div class="t" style="left:388px;top:479.5px;font-size:15px;color:#f2f2f2;letter-spacing:0.1px;text-shadow:1px 1px 0 #000,1px 1px 2px #000">LOD 2</div><div class="t" style="left:388px;top:496.5px;font-size:15px;color:#f2f2f2;letter-spacing:0.1px;text-shadow:1px 1px 0 #000,1px 1px 2px #000">Triangles: 11,622</div><div class="t" style="left:388px;top:513.5px;font-size:15px;color:#f2f2f2;letter-spacing:0.1px;text-shadow:1px 1px 0 #000,1px 1px 2px #000">Vertices: 11,453</div><div class="t" style="left:388px;top:547.5px;font-size:15px;color:#f2f2f2;letter-spacing:0.1px;text-shadow:1px 1px 0 #000,1px 1px 2px #000">LOD 3 - Voxel</div><div class="t" style="left:388px;top:564.5px;font-size:15px;color:#f2f2f2;letter-spacing:0.1px;text-shadow:1px 1px 0 #000,1px 1px 2px #000">Triangles: 12</div><div class="t" style="left:388px;top:581.5px;font-size:15px;color:#f2f2f2;letter-spacing:0.1px;text-shadow:1px 1px 0 #000,1px 1px 2px #000">Vertices: 8</div><div class="t" style="left:388px;top:598.5px;font-size:15px;color:#f2f2f2;letter-spacing:0.1px;text-shadow:1px 1px 0 #000,1px 1px 2px #000">Voxels: 64 30 13</div><svg style="left:1240px;top:810px;" width="290" height="85" viewBox="0 0 290 85"><path d="M6 77 L276 11" stroke="#ff0000" stroke-width="4.5"/><path d="M249 5 L277 11 L256 29" stroke="#ff0000" stroke-width="4.5" fill="none"/></svg><svg style="left:690px;top:465px;" width="580" height="345" viewBox="0 0 580 345"><defs><clipPath id="carclip"><polygon points="19,184 22,171 28,164 40,149 54,135 68,125 83,115 98,106 114,99 132,93 152,88 180,81 210,75 235,68 260,61 290,49 317,38 346,29 375,22 398,17 418,15 440,13 464,13 480,20 496,35 514,51 531,67 544,84 555,104 556,113 555,119 550,129 545,139 530,152 515,165 496,183 487,179 475,171 465,172 457,181 449,187 443,195 435,205 429,216 395,225 360,233 315,255 270,276 248,285 234,293 227,280 221,268 206,269 192,273 178,281 166,291 158,303 152,317 125,322 99,327 85,328 72,327 62,322 55,314 49,303 42,289 34,273 26,247 20,219 18,200"/></clipPath><linearGradient id="cabg" x1="0" y1="0" x2="1" y2="1"><stop offset="0" stop-color="#5a5c60"/><stop offset="0.5" stop-color="#3a3c40"/><stop offset="1" stop-color="#1a1b1e"/></linearGradient></defs><path d="M149,65 L344,27" stroke="#1a22d8" stroke-width="1.3"/><path d="M149,65 L98,106 M149,65 L210,75" stroke="#1a22d8" stroke-width="1"/><path d="M152,317 L221,268 M155,315 L234,280" stroke="#1a22d8" stroke-width="1"/><path d="M429,216 L496,183 M432,210 L487,179" stroke="#1a22d8" stroke-width="1"/><polygon points="19,184 22,171 28,164 40,149 54,135 68,125 83,115 98,106 114,99 132,93 152,88 180,81 210,75 235,68 260,61 290,49 317,38 346,29 375,22 398,17 418,15 440,13 464,13 480,20 496,35 514,51 531,67 544,84 555,104 556,113 555,119 550,129 545,139 530,152 515,165 496,183 487,179 475,171 465,172 457,181 449,187 443,195 435,205 429,216 395,225 360,233 315,255 270,276 248,285 234,293 227,280 221,268 206,269 192,273 178,281 166,291 158,303 152,317 125,322 99,327 85,328 72,327 62,322 55,314 49,303 42,289 34,273 26,247 20,219 18,200" fill="#2e4040"/><g clip-path="url(#carclip)"><polygon points="146,115 210,91 300,65 315,135 275,195 215,235 170,241 132,225 112,195 116,155" fill="url(#cabg)"/><ellipse cx="382" cy="83" rx="78" ry="33" transform="rotate(-16 382 83)" fill="#1c1d22"/><path d="M133,118 Q52,176 176,229 L190,225 Q75,173 148,113 z" fill="#0e0f12"/><polygon points="446,29 462,25 524,79 516,91" fill="#121316"/><path d="M501 144L509 145M449 173L463 173M28 238L24 230M328 173L320 181M489 144L490 151M43 217L27 223M28 238L36 244M488 63L471 74M367 38L376 41M407 67L397 62M339 208L338 203M455 41L465 37M239 290L234 293M449 187L443 195M24 230L22 228M51 213L50 205M123 127L116 132M84 249L79 255M260 87L274 92M21 205L18 200M63 205L74 202M479 146L469 145M32 264L29 256M299 88L312 84M125 322L112 324M222 242L213 240M437 157L446 156M275 60L264 70M437 24L450 21M433 107L431 98M94 210L97 214M118 321L124 314M188 187L170 191M98 123L106 127M269 202L250 203M227 212L222 206M66 316L80 306M328 173L314 171M64 236L63 229M143 260L125 267M131 257L141 255M504 137L511 126M83 160L94 157M306 180L303 190M437 24L435 35M361 75L380 64M490 151L501 144M57 277L68 280M320 77L333 76M107 280L100 285M146 110L138 115M34 270L32 264M24 230L27 223M239 210L227 212M168 281L158 282M57 189L59 179M290 111L277 113M464 96L473 106M90 228L73 238M31 204L19 210M161 102L153 111M372 220L380 226M104 255L102 264M310 200L315 204M227 280L227 280M117 293L128 290M502 153L489 159M134 306L124 314M29 199L45 195M412 57L404 55M126 180L134 173M66 316L59 313M187 88L199 91M58 220L69 222M104 133L116 132M338 41L336 32M70 148L61 152M185 181L165 186M87 284L100 285M210 172L217 162M177 281L185 274M109 295L117 293M63 229L69 222M423 182L408 184M154 301L158 303M338 41L327 46M345 69L333 76M424 31L435 35M473 160L470 153M109 295L113 303M423 196L431 192M549 122L550 116M389 140L383 131M398 120L403 112M387 123L383 131M199 164L210 157M241 272L231 283M318 124L329 115M459 133L454 139M505 104L496 113M137 196L148 199M401 32L395 38M272 224L289 216M267 137L269 128M250 69L237 73M56 241L46 240M473 41L481 37M308 57L321 55M330 201L338 203M429 207L422 205M135 317L133 312M423 52L435 46M75 128L76 139M479 76L502 71M487 179L475 171M90 240L88 235M449 111L456 103M241 169L249 159M210 172L228 167M22 228L20 219M47 292L53 285M63 200L50 205M490 80L500 76M328 39L338 41M56 256L51 262M338 94L332 85M288 165L297 156M131 257L130 252M307 256L306 259M159 273L145 284M228 236L237 242M275 152L262 154M56 290L66 290M419 94L431 98M45 195L50 205M113 303L125 297M240 261L243 254M141 122L132 122M374 181L380 184M202 135L214 124M236 231L228 236M36 227L43 217M101 226L90 228M341 147L329 146M459 46L457 54M175 265L181 270M378 173L382 165M115 152L118 144M43 217L35 214M112 288L118 276M538 142L538 146M264 236L264 242M112 128L106 127M299 148L301 139M453 79L459 83M291 51L301 46M401 32L400 42M246 231L237 242M514 165L522 158M424 123L412 134M520 126L520 121M415 143L426 130M91 113L83 115M98 220L107 220M168 281L161 292M341 147L342 137M240 261L225 264M260 61L270 57M202 135L200 125M110 112L111 105M221 231L235 223M68 125L76 120M93 142L82 152M390 47L379 48M252 265L263 263M453 79L463 71M66 290L74 293M469 145L471 136M56 147L67 143M76 285L66 290M193 272L192 273M408 16L418 15M309 131L322 132M488 28L505 43M190 201L203 203M540 118L542 112M298 240L281 245M515 158L525 156M530 152L506 174M370 210L360 212M404 82L414 73M445 26L448 31M528 83L522 78M315 100L314 109M426 155L437 157M497 124L511 126M81 271L87 275M240 80L237 73M264 178L257 169M367 54L359 66M219 221L227 212M400 139L395 129M179 164L168 161M284 239L298 240M338 94L355 83M285 72L281 80M243 155L252 143M504 163L514 165M349 114L340 127M376 159L382 165M225 264L221 268M29 187L27 179M361 75L378 77M449 164L446 156M301 46L308 42M157 227L148 227M523 113L520 121M37 275L34 273M26 211L20 219M212 193L203 203M97 291L86 300M208 259L214 251M243 247L237 242M314 109L327 100M126 171L121 163M449 173L455 179M113 198L113 188M240 261L257 257M57 302L67 309M176 104L162 108M27 179L33 172M395 217L395 224M45 195L33 192M244 116L257 109M223 154L231 159M41 189L48 183M103 148L112 138M315 100L332 85M156 306L152 317M68 280L76 277M521 90L513 89M446 156L453 158M64 236L56 241M79 215L69 222M29 187L19 184M76 182L71 177M532 134L536 125M367 194L363 185M388 69L380 64M259 99L257 109M288 264L297 263M144 99L155 88M265 251L254 247M151 261L163 265M47 156L46 146M42 168L58 165M221 185L222 175M549 122L536 125M190 201L187 196M83 160L74 155M544 84L555 104M163 265L174 259M391 110L387 123M196 156L199 164M490 80L502 71M345 69L337 67M307 91L299 88M269 245L264 242M364 116L349 114M67 263L79 255M205 105L190 112M258 280L248 285M300 112L314 109M80 174L71 177M99 239L88 235M26 244L24 238M104 203L94 210M265 223L265 216M489 159L490 151M136 297L153 289M190 212L197 217M481 131L471 136M161 292L154 301M227 270L227 280M342 137L329 146M500 41L487 47M374 124L387 123M435 118L443 106M446 139L448 145M98 280L87 275M314 109L323 112M395 217L397 207M103 148L102 143M208 226L212 218M263 64L264 70M212 193L221 185M146 110L141 122M355 207L352 201M80 174L87 163M533 139L538 142M481 37L488 28M144 165L145 156M253 78L240 80M150 216L161 205M342 86L338 94M266 230L272 224M227 193L237 186M394 101L375 106M320 77L320 88M524 150L517 145M136 244L120 248M329 115L323 112M244 116L242 124M449 89L431 98M234 254L243 254M135 146L122 156M110 263L102 264M285 72L293 65M457 28L468 18M364 31L365 24M234 254L221 254M455 14L450 21M481 131L468 129M429 173L434 166M51 213L65 210M271 57L280 53M246 231L258 229M520 131L522 139M157 115L162 108M162 141L177 137M208 259L205 267M514 109L515 117M97 291L85 293M437 145L441 151M67 263L72 252M79 215L85 209M551 98L550 94M110 263L121 261M119 254L121 261M150 207L142 214M293 198L304 197M410 216L406 222M318 40L308 42M151 261L137 268M86 122L83 115M234 254L225 264M328 39L336 32M144 165L158 163M230 125L225 137M277 113L284 118M109 295L97 291M497 108L489 111M247 178L241 169M102 179L96 189M103 110L111 105M129 131L132 122M78 144L76 139M23 219L27 223M217 91L206 96M280 53L290 49M400 42L395 38M328 39L327 46M66 316L76 324M446 139L432 142M330 242L342 242M238 99L253 95M88 194L96 189M478 58L463 71M419 216L429 216M290 49L299 45M312 240L317 234M545 139L538 146M284 222L272 224M488 63L463 71M32 264L31 264M462 139L454 139M346 43L357 39M395 201L397 207M33 172L22 171M501 90L501 98M126 171L126 180M538 146L530 152M244 116L254 122M153 270L163 265M243 155L228 167M241 272L233 271M288 165L275 169M141 122L142 128M227 280L221 268M205 115L222 109M304 231L287 233M112 213L124 208M450 99L443 106M118 144L120 139M494 39L487 47M124 208L122 200M255 241L251 235M438 184L441 178M321 249L302 250M342 137L353 125M75 269L67 273M412 176L411 170M490 80L479 86M114 235L130 234M465 160L463 173M101 226L98 220M499 59L495 51M358 182L351 188M338 94L343 98M469 145L478 137M145 284L153 289M82 152L74 155M206 96L199 91M90 176L80 174M532 90L538 83M316 51L321 55M199 101L185 106M127 115L123 127M85 293L100 285M94 319L99 327M501 98L513 89M227 193L243 191M449 173L433 177M343 98L327 100M368 228L360 233M67 263L78 261M176 243L173 250M479 146L470 153M168 161L183 155M107 241L95 245M423 182L414 193M274 92L281 80M225 137L220 128M380 85L378 77M323 112L308 123M419 161L410 163M394 101L406 103M227 280L233 271M374 181L363 185M542 112L550 116M437 202L435 195M279 136L280 126M388 69L378 77M127 192L113 188M64 158L61 152M367 54L370 47M190 201L190 212M327 100L334 105M31 250L42 248M153 270L137 268M315 190L321 196M358 172L350 164M181 82L170 91M418 149L405 153M88 194L85 183M239 210L251 210M131 257L125 267M401 32L408 26M303 119L280 126M227 212L234 204M126 171L134 173M30 165L22 171M158 303L152 317M151 186L156 176M360 107L375 97M237 147L231 159M426 155L428 164M449 173L441 168M174 97L161 102M228 167L249 159M126 180L116 180M312 147L329 146M115 152L111 162M307 256L315 255M129 241L120 248M533 71L538 76M111 105L98 106M125 267L137 268M453 79L449 89M126 147L118 144M194 236L193 224M387 215L395 217M520 131L520 126M418 149L415 143M234 69L237 73M281 80L292 75M424 59L407 67M327 69L328 57M528 107L535 109M68 127L54 135M126 180L113 188M303 119L323 112M176 104L185 106M65 133L76 139M340 231L358 231M104 318L99 327M254 122L257 109M66 316L67 309M395 38L392 27M193 224L212 218M388 175L374 181M251 235L246 231M168 281L171 272M367 54L379 48M81 271L94 270M227 212L212 218M180 253L166 257M281 80L268 79M493 120L482 123M511 68L500 76M299 105L300 112M34 270L38 259M112 213L107 209M353 74L361 75M524 150L511 153M190 245L180 253M435 35L419 45M205 267L214 262M236 231L237 242M431 18L442 14M154 301L153 289M23 219L26 211M448 31L435 35M95 166L111 162M376 150L360 157M414 204L406 208M303 119L284 118M348 32L346 43M98 123L111 118M87 284L74 293M395 81L407 67M523 96L532 90M314 215L323 220M194 251L204 243M209 246L214 251M308 42L317 38M58 220L65 210M97 291L112 288M437 202L443 195M151 146L162 141M413 89L406 103M285 212L295 203M493 130L488 138M315 62L328 57M67 273L68 280M522 158L515 165M206 168L196 176M414 116L424 123M110 271L107 280M211 79L222 72M328 57L336 46M528 83L538 83M347 224L351 217M66 192L54 199M414 116L398 120M388 175L399 171M426 155L432 142M441 178L430 185M269 128L255 136M301 46L299 45M254 122L242 124M227 212L240 216M471 74L479 76M525 156L522 158M299 148L312 147M87 131L89 135M165 115L167 127M265 223L266 230M42 168L37 179M333 155L318 164M129 131L142 128M358 182L350 182M403 112L406 103M107 241L99 239M70 148L67 143M474 169L475 171M280 268L272 270M65 173L76 165M413 155L405 153M57 277L45 280M278 65L268 79M47 292L49 298M401 32L400 23M306 180L314 171M356 147L348 155M500 41L494 39M190 145L204 144M312 147L301 161M500 41L505 43M153 129L157 115M341 111L329 115M304 231L300 221M395 201L406 194M413 37L419 45M38 160L34 156M63 205L50 205M87 260L79 255M284 222L298 216M234 179L222 175M131 257L141 248M34 156L40 149M356 224L351 217M481 37L489 31M254 187L264 178M211 79L200 77M524 150L530 152M352 237L351 237M235 133L230 125M259 99L253 95M468 18L480 20M64 236L55 234M83 160L76 165M288 165L301 161M260 87L246 92M40 149L47 142M217 91L236 92M365 24L375 22M35 214L27 223M151 186L137 196M300 221L287 233M445 26L457 22M301 161L318 164M452 151L453 158M128 290L132 283M380 64L378 77M190 145L202 135M110 271L118 276M257 222L246 231M375 22L386 20M465 172L457 181M252 195L243 191M156 176L158 163M407 47L419 45M279 232L272 224M370 47L376 41M210 172L206 168M34 270L31 264M29 187L37 179M524 150L533 139M457 181L449 187M128 106L135 100M143 319L134 320M75 128L65 133M372 29L386 24M498 65L479 76M83 160L82 152M127 115L119 110M134 320L125 322M136 155L121 163M106 231L88 235M315 190L304 197M521 72L508 77M82 152L94 152M314 138L299 148M112 128L111 118M76 165L71 177M298 240L285 250M132 213L124 208M389 140L396 149M455 14L464 13M230 125L242 124M434 166L441 168M39 154L46 146M414 193L414 198M511 68L502 71M461 64L445 75M395 81L395 72M271 57L270 57M102 143L112 138M171 236L156 251M368 216L386 208M159 91L161 86M499 59L506 63M364 164L376 159M58 296L49 303M266 103L282 96M350 164L339 162M76 165L87 163M339 190L321 196M227 270L225 264M382 34L395 38M410 216L418 219M280 126L284 118M59 313L55 314M502 153L509 145M431 192L430 185M400 23L417 19M328 39L327 35M167 127L148 138M505 172L514 165M303 68L292 75M104 154L94 152M214 262L221 268M487 172L497 169M339 208L347 213M542 132L532 134M151 186L165 186M315 62L303 68M455 41L443 50M151 261L143 260M255 241L243 247M119 254L120 248M445 189L438 184M360 212L371 201M445 17L455 14M104 255L93 253M373 139L368 134M227 270L221 268M367 194L374 181M315 62L321 55M257 222L265 216M103 110L110 112M153 129L149 121M118 226L130 234M217 162L210 157M342 137L340 127M410 163L399 171M168 161L169 172M259 147L262 154M533 71L522 78M118 226L112 224M94 198L94 210M248 282L231 283M373 139L389 140M120 98L111 105M242 138L223 144M185 181L196 176M151 261L153 270M104 154L118 144M126 171L136 155M85 324L72 327M464 15L464 13M79 255L78 261M193 272L185 274M315 190L326 190M376 41L379 48M461 64L463 71M210 172L196 176M446 156L441 151M407 67L414 73M534 149L530 152M199 164L206 168M198 259L198 265M56 147L47 156M296 128L290 137M484 150L479 146M504 137L509 145M448 145L460 147M175 265L171 272M100 308L93 306M87 260L78 261M86 316L85 324M217 199L203 203M29 199L18 200M298 60L293 65M101 116L98 123M55 137L67 143M284 182L293 189M156 240L140 235M171 236L179 228M533 71L537 76M372 167L358 172M429 173L423 182M368 228L372 230M46 275L55 265M185 181L173 178M514 109L496 113M174 97L176 104M363 96L375 97M480 118L471 119M179 228L166 229M412 176L400 178M438 88L419 94M280 177L284 182M252 195L250 203M50 205L31 204M111 162L121 163M431 18L437 24M128 290L123 285M209 84L220 84M110 271L102 264M226 244L222 242M136 244L156 240M72 252L70 244M343 176L336 184M303 190L293 198M318 40L309 45M138 187L127 192M103 247L104 255M520 131L531 122M104 133L112 128M484 26L488 28M228 167L217 162M119 217L118 226M47 142L54 135M208 259L221 254M48 252L62 248M110 271L121 261M34 270L51 262M326 226L312 226M179 164L183 155M39 154L40 149M35 214L26 211M47 156L61 152M318 124L309 131M386 20L398 17M509 85L508 77M511 126L520 126M330 242L324 251M40 233L49 225M398 17L408 16M415 143L396 149M412 176L429 173M113 188L103 193M121 261L130 252M68 280L56 290M202 135L220 128M533 71L531 67M76 182L90 176M419 45L404 55M331 219L326 226M46 275L44 269M378 173L374 181M182 143L171 147M314 171L320 181M78 144L74 155M43 217L49 225M112 213L97 214M227 270L240 261M150 207L148 199M199 164L196 176M95 166L80 174M269 245L281 245M42 168L33 172M358 134L342 137M464 96L449 89M51 213L44 211M321 196L315 204M112 324L99 327M262 154L249 159M249 276L258 280M29 187L19 188M199 101L206 96M80 306L93 306M309 45L321 44M360 107L375 106M542 132L550 129M189 265L181 270M445 75L446 67M183 172L169 172M55 265L44 269M442 14L452 13M368 228L380 226M90 228L88 235M98 280L87 284M510 52L514 51M209 246L213 240M126 171L116 180M303 190L304 197M497 108L496 113M263 64L254 72M204 243L213 240M423 52L419 45M104 133L89 135M190 201L200 196M236 231L246 231M159 91L164 85M222 242L228 236M271 121L252 130M348 32L340 31M157 227L140 235M514 109L523 113M76 324L84 311M330 201L321 196M286 205L293 198M91 113L86 122M360 212L351 217M343 176L339 168M392 165L399 171M324 212L320 208M285 149L301 139M251 235L266 230M341 111L334 105M173 219L163 213M407 47L388 55M118 226L133 222M123 96L132 93M306 180L293 189M145 305L153 289M459 46L443 50M45 195L54 199M22 171L34 156M202 135L182 143M464 13L480 20M133 222L136 228M259 270L268 265M150 216L133 222M494 39L483 42M327 69L333 76M395 201L396 193M304 52L308 57M163 265L159 273M239 210L240 216M332 85L333 76M131 257L143 260M212 193L200 196M337 60L327 69M315 190L320 181M339 168L328 165M240 261L233 271M129 241L122 237M383 228L372 230M408 26L417 19M169 154L158 163M72 252L62 259M333 155L348 155M279 263L280 268M502 153L511 153M302 170L296 177M209 246L194 251M75 128L87 131M35 214L31 204M49 303L42 289M241 105L257 109M514 109L506 119M65 210L78 207M63 205L65 210M150 207L134 206M286 205L295 203M288 226L287 233M63 322L72 327M392 158L396 149M296 177L293 189M235 133L252 130M412 134L400 139M224 78L237 73M288 165L302 170M169 154L182 143M68 166L58 165M432 142L418 149M77 192L74 202M182 210L190 212M199 91L209 84M350 182L339 190M214 141L225 137M459 133L462 139M516 54L522 59M507 45L495 51M165 115L176 104M449 164L449 173M183 172L199 164M182 210L163 213M358 182L363 185M500 41L496 35M252 130L242 124M378 77L367 82M481 37L483 42M390 47L395 38M243 254L243 247M158 282L153 289M356 147L360 157M400 23L398 17M479 113L480 118M514 165L515 165M543 93L544 84M118 243L122 237M288 226L279 232M76 324L63 322M91 113L98 106M471 136L468 129M479 113L467 114M400 178L408 184M377 205L371 201M340 31L336 32M523 96L512 105M257 169L241 169M112 224L107 220M526 101L512 105M75 269L76 277M68 125L83 115M87 131L106 127M328 235L326 226M278 256L279 263M413 89L428 86M65 210L74 202M127 278L123 285M107 241L122 237M542 132L533 139M424 59L412 57M187 88L189 80M443 58L432 62M132 283L123 285M494 177L497 169M112 288L123 285M185 181L183 172M47 156L42 168M517 145L509 145M212 193L227 193M45 280L42 289M415 143L400 139M406 103L419 94M51 213L58 220M476 25L480 20M129 241L140 235M123 285L118 276M468 18L464 15M372 29L365 24M252 265L240 261M280 177L264 178M259 147L243 155M269 128L252 130M424 123L407 127M479 113L488 101M78 144L89 135M383 191L392 182M56 147L55 137M394 101L391 110M487 172L482 168M76 121L68 125M455 14L452 13M142 176L156 176M116 132L120 139M33 192L38 184M331 219L340 223M481 131L482 123M302 204L295 203M363 96L353 104M328 235L340 231M29 187L33 192M379 112L387 123M56 256L62 259M497 135L511 126M76 285L74 293M400 178L398 187M194 236L205 234M26 211L19 210M278 65L284 56M85 209L86 203M540 118L531 122M55 265L51 262M36 227L27 223M370 47L379 48M94 319L100 308M59 313L62 322M404 82L395 81M426 130L435 118M464 151L470 153M203 189L222 175M280 177L296 177M480 97L479 86M412 57L419 45M31 250L26 247M320 77L304 79M445 17L450 21M298 240L307 234M419 45L435 46M211 79L220 84M209 148L223 144M424 31L410 31M406 194L408 184M314 171L296 177M291 51L299 45M65 133L68 127M80 241L73 238M94 270L87 275M116 180L106 185M253 78L264 70M234 197L222 206M112 128L123 127M127 115L128 106M127 319L125 322M113 170L116 180M135 100L142 90M288 264L288 268M376 159L385 153M221 254L214 251M241 105L231 115M341 147L358 134M127 115L138 115M142 90L152 88M188 187L187 196M515 117L506 119M67 263L55 265M424 123L426 116M265 251L272 253M156 176L169 172M437 202L429 207M380 226L383 228M542 132L536 125M254 187L247 178M343 176L358 172M432 142L434 132M534 149L538 146M314 138L301 139M242 138L237 147M136 228L130 234M151 146L145 156M59 179L71 177M297 246L285 250M115 152L104 154M327 69L337 67M394 101L379 112M166 291L158 303M239 210L250 203M173 205L187 196M62 248L70 244M173 219L166 229M268 276L270 276M143 319L112 324M194 236L204 243M173 205L178 195M481 37L496 35M244 226L236 231M500 76L508 77M102 300L93 306M366 148L360 157M449 89L469 83M426 130L424 123M161 152L145 156M372 167L378 173M147 315L156 306M310 210L314 215M151 248L141 255M111 162L100 172M66 299L66 290M23 219L20 219M187 88L181 82M395 81L393 92M303 190L320 181M446 139L437 145M284 182L267 191M450 99L431 98M175 265L183 259M424 59L432 62M67 309L66 299M504 163L511 153M198 259L203 253M478 58L495 51M480 97L497 84M297 262L307 256M161 205L148 199M488 63L495 51M509 98L501 98M164 252L176 243M254 187L267 191M331 219L347 213M231 115L230 125M487 172L487 179M27 179L37 179M266 103L257 109M356 147L358 134M395 224L395 225M318 40L317 38M290 257L302 250M484 26L480 20M464 151L460 147M279 263L268 265M127 319L133 312M303 119L308 123M398 187L383 191M210 172L199 183M161 152L158 163M95 166L104 154M488 101L497 108M247 178L234 179M288 226L300 221M125 297L136 297M497 84L508 77M63 229L50 232M130 140L126 147M388 175L392 182M39 154L34 156M243 155L249 159M104 203L103 193M299 88L282 96M151 248L156 240M330 242L333 246M555 107L555 104M264 178L247 178M222 260L221 254M487 172L494 177M210 75L222 72M445 26L450 21M419 216L418 219M502 153L501 144M304 79L312 84M296 128L309 131M150 207L150 216M328 235L340 223M328 235L317 234M107 323L104 318M117 293L123 285M179 164L183 172M403 112L391 110M489 144L479 146M392 165L378 173M328 165L318 164M447 181L445 189M265 223L257 222M374 181L368 176M445 26L435 35M504 137L520 131M182 210L173 205M414 116L403 112M170 91L159 91M304 52L309 45M320 88L332 85M330 201L315 204M440 13L464 13M222 260L225 264M31 204L44 211M56 241L42 248M106 231L112 224M265 223L258 229M479 146L478 137M364 25L364 31M203 203L190 212M549 122L550 129M44 269L34 273M150 207L161 205M367 38L351 49M259 161L269 160M93 253L95 245M380 64L372 59M290 257L279 263M364 25L356 27M110 112L101 116M177 137L188 120M302 204L310 200M318 124L323 112M350 164L348 155M442 14L440 13M314 138L322 141M260 87L243 85M428 164L411 170M388 175L392 165M47 292L56 290M222 260L221 268M320 88L333 76M114 235L118 226M214 141L204 144M412 57L397 62M157 227L163 213M132 96L132 93M165 115L157 115M84 249L72 252M337 60L354 55M340 223L347 213M324 212L331 219M348 32L357 39M317 234L312 226M119 254L130 252M94 319L85 328M223 144L235 133M57 189L67 185M342 86L332 85M173 205L161 205M447 181L449 187M144 310L145 305M130 140L135 146M474 31L465 37M285 157L275 152M479 86L479 76M449 164L441 168M63 229L58 220M529 117L523 113M514 109L512 105M372 220L368 216M536 125L531 122M264 113L277 113M251 235L264 236M449 164L453 158M67 273L57 271M214 141L202 135M221 231L213 240M269 202L265 216M353 125L349 114M89 220L97 214M22 171L28 164M76 285L76 277M308 57L303 68M214 124L231 115M310 210L300 221M28 164L34 156M498 65L502 71M346 29L356 27M364 164L350 164M47 156L38 160M309 131L290 137M432 142L437 145M410 216L414 204M37 179L33 172M179 121L167 127M370 210L368 216M278 65L298 60M356 27L365 24M51 176L38 184M339 162L328 165M30 165L28 164M255 241L254 247M57 277L67 273M320 88L315 100M71 214L79 215M174 97L188 98M320 208L314 215M284 56L280 53M475 171L465 172M72 252L56 256M310 210L302 209M479 113L489 111M377 190L371 201M359 66L372 59M425 23L416 26M392 158L405 153M238 99L236 92M153 129L148 138M111 105L114 99M152 317L143 319M278 256L268 265M266 103L279 103M407 127L395 129M152 102L159 91M444 38L443 50M234 254L237 242M284 56L291 51M26 247L22 228M190 245L194 251M275 213L285 212M151 261L156 251M459 83L471 74M107 241L114 235M516 54L514 51M227 280L231 283M480 118L482 123M288 264L280 268M68 127L68 125M309 45L308 42M127 278L118 276M110 271L94 270M164 85L161 86M342 86L355 83M392 158L392 165M465 160L473 160M364 116L375 106M200 125L188 120M511 68L515 59M284 182L274 194M136 297L134 306M307 91L293 98M156 240L166 229M250 69L254 72M136 244L141 248M532 134L533 139M251 235L237 242M348 32L346 29M533 71L521 72M112 128L116 132M113 170L102 179M138 115L132 122M134 206L124 208M53 285L56 290M107 241L103 247M299 88L304 79M398 120L391 110M555 107L550 116M356 224L368 228M489 144L488 138M72 252L79 255M117 310L124 314M278 65L285 72M330 242L340 231M426 155L437 145M156 176L168 161M38 259L32 264M219 221L208 226M76 120L83 115M353 74L345 69M205 115L218 101M330 242L319 242M417 19L418 15M57 277L53 285M509 85L513 89M388 55L404 55M167 127L177 137M517 145L533 139M504 163L497 169M155 88L161 86M76 182L66 192M380 85L395 81M418 15L429 14M31 204L21 205M63 200L66 192M341 111L343 98M343 98L353 104M459 46L465 37M319 242L302 250M432 142L444 134M474 31L481 37M128 290L125 297M338 120L340 127M376 150L376 159M250 69L263 64M429 216L418 219M437 202L435 205M177 281L170 287M161 292L158 303M284 56L298 60M523 96L534 98M522 158L506 174M526 101L534 98M417 103L406 103M125 267L118 276M418 219L406 222M112 213L98 220M275 213L278 203M85 328L72 327M95 166L87 163M424 59L435 46M358 172L368 176M102 179L116 180M72 327L62 322M336 184L320 181M328 173L336 184M103 110L101 116M288 226L284 222M63 229L75 225M222 206L234 204M275 60L280 53M386 24L395 20M383 191L377 190M314 138L309 131M528 83L537 76M240 216L235 223M259 270L249 276M68 166L51 176M290 137L301 139M127 115L112 128M326 190L336 184M446 156L441 168M285 72L292 75M151 186L173 178M474 169L465 172M395 201L386 208M31 250L29 256M406 194L414 193M272 270L279 272M203 253L194 251M190 245L176 243M473 160L465 172M137 196L122 200M68 166L64 158M301 161L297 156M291 51L290 49M461 122L455 115M390 47L388 55M490 151L481 155M190 245L204 243M212 193L217 199M274 145L262 154M410 163L411 170M180 253L174 259M351 217L340 223M234 69L222 72M397 207L386 208M127 319L134 320M468 129L471 119M405 213L395 224M285 72L268 79M281 245L285 250M151 248L156 251M266 103L259 99M493 120L497 124M457 54L443 58M211 79L210 75M352 237L358 231M141 122L129 131M341 111L353 104M243 85L246 92M227 270L233 271M423 182L430 185M497 124L506 119M157 227L166 229M372 167L364 164M389 140L395 129M40 149L54 135M187 88L198 83M46 275L45 280M444 134L434 132M244 116L230 125M433 177L430 185M222 206L212 218M445 124L435 118M145 305L133 312M140 274L132 283M144 99L159 91M117 310L106 310M219 221L221 231M161 102L162 108M375 22L398 17M496 113L489 111M443 50L432 62M330 242L336 244M198 259L194 251M520 65L522 59M481 131L493 130M19 188L19 184M30 165L33 172M505 104L497 108M59 179L48 183M524 150L538 142M278 203L293 189M354 193L341 194M444 38L448 31M346 43L342 49M134 320L112 324M23 219L22 228M328 173L339 168M386 24L386 20M19 188L18 200M463 32L465 37M293 198L295 203M328 173L328 165M297 262L288 264M76 121L83 115M297 156L285 157M464 151L479 146M205 105L206 96M198 265L208 259M251 235L258 229M95 245L90 240M178 195L161 205M528 67L522 59M317 155L329 146M223 154L210 157M368 134L383 131M367 38L370 47M87 260L93 253M364 31L372 29M115 152L122 156M234 197L234 204M395 224L406 222M367 194L361 202M132 122L123 127M321 249L307 256M280 126L269 128M161 205L163 213M141 255L156 251M29 199L33 192M214 262L206 269M285 250L272 253M66 290L58 296M252 143L255 136M202 135L189 131M345 69L359 66M397 62L388 55M114 235L99 239M398 120L395 129M445 124L455 115M89 220L90 228M217 199L227 193M98 106L114 99M376 41L395 38M267 137L280 126M417 19L431 18M296 128L280 126M243 254L254 247M135 146L126 147M380 21L386 20M361 202L371 201M47 156L54 159M132 96L128 106M114 99L123 96M417 19L425 23M440 13L452 13M351 217L347 213M363 185L368 176M405 213L406 222M235 133L225 137M66 316L84 311M412 176L408 184M125 267L121 261M393 92L394 101M373 139L366 148M94 198L88 194M452 13L464 13M68 280L66 290M274 145L275 152M549 122L555 119M244 226L246 231M406 222L395 225M320 77L327 69M176 243L156 251M64 158L58 165M199 183L222 175M315 190L303 190M237 73L248 64M395 225L383 228M479 113L473 106M62 322L55 314M265 251L257 257M79 215L75 225M323 220L326 226M297 246L302 250M515 59L522 59M55 314L49 303M132 96L123 96M396 193L408 184M290 111L300 112M515 117L520 121M113 198L103 193M350 164L360 157M94 198L96 189M128 303L113 303M223 154L217 162M251 210L250 203M267 191L274 194M120 248L118 243M417 19L416 26M413 89L394 101M147 315L143 319M373 139L383 131M161 102L159 91M307 222L323 220M260 87L259 99M338 41L336 46M96 189L106 185M429 173L428 164M76 324L72 327M534 149L538 142M101 116L111 118M170 287L178 281M190 145L169 154M483 42L496 35M126 180L142 176M529 117L542 112M446 139L454 139M377 205L388 199M403 161L399 171M113 170L121 163M433 107L426 116M177 137L189 131M353 74L332 85M267 137L274 145M94 198L103 193M113 303L117 310M131 257L121 261M107 280L118 276M137 291L136 297M189 265L185 274M433 107L417 103M104 255L120 248M50 232L46 240M188 187L196 176M238 99L222 109M380 85L395 72M169 154L168 161M328 235L330 242M241 105L238 99M438 88L445 75M199 91L188 98M278 256L285 250M338 94L359 90M203 203L200 196M482 168L475 171M257 222L258 229M511 126L520 121M514 51L522 59M353 74L333 76M317 155L301 161M388 69L395 72M113 198L122 200M110 271L98 280M45 280L53 285M66 316L63 322M124 314L133 312M413 37L400 42M447 181L449 173M457 22L450 21M333 246L324 251M206 96L209 84M284 182L267 183M290 111L299 105M57 302L58 296M479 86L469 83M253 78L254 72M461 122L468 129M388 175L400 178M532 90L521 90M26 247L24 238M173 178L169 172M70 148L64 158M254 187L267 183M316 51L321 44M234 254L240 261M110 112L111 118M144 310L133 312M263 64L256 62M24 238L22 228M260 87L253 95M147 315L144 310M41 189L57 189M426 130L434 132M132 213L118 226M135 109L135 100M542 132L545 139M243 254L257 257M127 278L140 274M166 257L174 259M352 201L361 202M279 136L274 145M237 147L252 143M338 120L349 114M39 154L38 160M307 91L312 84M264 178L275 169M65 173L71 177M263 263L272 253M179 121L188 120M447 181L455 179M144 165L134 173M473 41L459 46M495 51L487 47M48 252L56 256M353 74L355 83M180 253L194 251M327 69L311 69M150 216L148 227M392 165L403 161M321 249L330 242M443 50L443 58M70 148L74 155M69 222L75 225M387 215L386 208M488 63L499 59M128 303L125 297M341 147L348 155M364 116L374 124M417 19L408 16M443 50L435 46M151 248L141 248M153 270L140 274M155 88L152 88M206 96L218 101M339 162L333 155M455 41L459 46M358 182L368 176M75 269L67 263M242 138L255 136M22 171L40 149M318 124L338 120M395 217L380 226M429 207L429 216M403 112L417 103M339 168L339 162M161 292L166 291M385 153L396 149M433 177L441 168M505 104L512 105M446 67L424 70M254 122L264 113M128 303L134 306M132 93L142 90M200 196L187 196M83 160L87 163M79 215L94 210M437 24L442 14M129 131L120 139M324 212L339 208M516 54L510 52M97 291L100 285M398 187L396 193M189 131L188 120M284 239L276 239M524 150L525 156M367 54L354 55M29 199L20 194M49 303L34 273M175 265L174 259M267 137L252 143M356 224L368 216M321 249L324 251M540 118L549 122M412 134L407 127M275 60L270 57M236 231L235 223M130 140L129 131M501 98L495 95M315 62L311 69M274 92L282 96M361 202L360 212M63 322L62 322M85 293L87 284M367 194L377 190M269 202L251 210M49 298L58 296M404 82L393 92M504 137L497 135M377 190L380 184M445 17L452 13M457 28L448 31M323 220L312 226M211 79L209 84M289 216L302 209M290 257L297 246M138 187L156 176M489 144L497 135M450 99L456 103M182 210L173 219M279 232L266 230M532 90L544 84M106 310L100 308M400 23L408 16M308 57L298 60M141 255L141 248M398 120L407 127M480 97L495 95M353 125L362 127M514 165L506 174M543 93L550 94M290 85L281 80M87 275L76 277M65 133L54 135M89 220L98 220M285 212L302 204M170 191L148 199M340 31L346 29M271 121L264 113M433 107L450 99M494 177L496 183M355 207L347 213M230 125L220 128M298 256L302 250M80 241L90 240M528 83L521 90M76 182L77 192M126 180L127 192M400 139L396 149M380 85L363 96M190 201L182 210M151 186L148 199M414 116L417 103M459 83L469 83M410 216L422 205M63 200L77 192M190 79L200 77M51 176L50 170M107 209L97 214M275 213L286 205M104 203L107 209M531 67L538 76M387 215L397 207M372 29L375 22M161 292L153 289M297 262L298 256M187 88L170 91M168 281L153 289M354 193L351 188M135 146L136 155M505 172L506 174M406 194L414 198M265 223L272 224M159 91L155 88M315 255L306 259M130 140L120 139M87 131L98 123M249 276L231 283M435 195L431 192M516 54L515 59M151 261L164 252M76 121L76 120M321 55L327 46M275 213L265 216M126 147L122 156M140 235L130 234M82 226L90 228M435 195L443 195M505 172L497 169M547 106L535 109M189 265L183 259M190 201L173 205M127 192L122 200M341 147L356 147M298 240L312 240M304 231L307 222M290 257L285 250M182 210L183 220M113 303L100 308M20 219L19 210M55 137L47 142M370 47L351 49M142 176L134 173M142 128L149 121M118 321L127 319M76 324L85 324M217 91L209 84M307 256L302 250M93 142L102 143M64 236L73 238M253 78L268 79M422 205L435 195M444 134L461 122M280 268L288 268M181 82L180 81M102 300L100 308M380 85L359 90M346 43L351 49M218 101L236 92M322 132L322 141M223 144L210 157M48 252L56 241M318 124L308 123M190 145L182 143M336 46L327 46M360 157L348 155M224 78L222 72M336 184L339 190M80 241L88 235M231 83L240 80M26 244L36 244M360 107L353 104M408 26L416 26M80 306L84 311M135 109L128 106M509 98L521 90M40 233L36 244M36 227L49 225M174 97L187 88M380 21L375 22M144 165L161 152M356 147L368 134M279 103L277 113M135 109L138 115M228 236L221 231M134 206L132 213M299 88L290 85M162 141L167 127M156 306L154 301M135 109L152 102M57 277L57 271M345 69L354 55M449 173L441 178M540 118L529 117M380 226L372 230M267 191L267 183M340 231L352 237M137 291L132 283M278 203L265 216M242 138L235 133M383 191L396 193M237 73L235 68M407 127L400 139M141 122L153 111M324 212L330 201M211 79L198 83M208 226L221 231M20 194L18 200M438 88L428 86M75 269L78 261M55 137L65 133M217 91L218 101M372 167L376 159M134 206L137 196M473 106L456 103M435 118L449 111M326 190L321 196M299 148L285 157M268 276L259 280M114 235L122 237M222 72L210 75M134 206L148 199M150 216L136 228M194 251L183 259M285 212L302 209M114 235L106 231M54 159L61 152M132 213L142 214M145 305L134 306M189 131L200 125M51 213L43 217M147 315L152 317M31 264L26 247M86 300L102 300M489 31L496 35M138 187L137 196M103 247L118 243M28 238L24 238M48 252L35 254M135 317L143 319M481 131L497 124M234 69L222 72M520 131L511 126M290 85L282 96M465 160L470 153M298 216L302 209M423 196L414 204M41 189L45 195M171 236L194 236M170 91L161 102M271 121L269 128M317 155L312 147M241 272L249 276M133 222L142 214M269 202L278 203M380 85L367 82M98 220L97 214M221 185L227 193M241 169L222 175M487 172L475 171M474 31L484 26M395 224L383 228M318 40L327 35M205 234L213 240M252 130L255 136M351 188L341 194M41 189L38 184M53 285L42 289M164 252L156 251M50 205L54 199M66 299L74 293M395 217L383 228M179 121L165 115M54 135L68 125M452 151L446 156M504 163L515 158M226 244L221 254M59 179L51 176M275 152L269 160M555 107L556 113M42 168L38 160M315 190L310 200M280 177L275 169M431 18L425 23M86 316L94 319M157 227L156 240M51 262L62 259M231 83L237 73M540 118L550 116M103 193L106 185M164 252L173 250M493 120L496 113M495 51L505 43M74 300L86 300M119 217L107 220M360 212L368 216M188 187L185 181M127 278L132 283M128 303L117 310M198 265L189 265M398 187L392 182M87 260L102 264M455 115L456 103M193 224L208 226M435 205L429 216M250 69L248 64M424 59L424 70M88 194L86 203M555 107L547 106M497 84L500 76M137 268L118 276M103 148L94 152M298 60L303 68M99 327L85 328M354 55L337 67M94 270L102 264M263 64L270 57M252 265L249 276M59 313L67 309M364 25L365 24M243 191L237 186M471 74L463 71M324 212L314 215M407 47L404 55M388 175L378 173M434 166L446 156M234 179L237 186M469 145L462 139M94 157L104 154M188 187L199 183M395 201L414 198M132 96L142 90M506 63L502 71M299 88L293 98M157 227L173 219M129 131L123 127M509 85L497 84M257 257L272 253M87 131L86 122M410 216L419 216M380 64L359 66M307 91L315 100M297 246L298 240M304 231L298 240M280 177L267 183M368 228L358 231M45 195L57 189M397 207L414 198M257 169L275 169M103 148L118 144M214 141L209 148M203 189L187 196M354 55L351 49M372 220L386 208M84 249L93 253M478 58L487 47M116 180L113 188M275 169L269 160M340 231L351 237M152 102L161 102M119 254L110 263M445 124L434 132M380 85L393 92M321 196L310 200M429 207L435 205M231 83L224 78M162 141L171 147M107 209L113 198M311 69L303 68M211 79L224 78M320 88L312 84M480 20L488 28M189 265L175 265M254 215L257 222M212 193L203 189M223 144L225 137M284 239L287 233M275 152L285 149M234 254L243 247M265 223L275 213M45 195L31 204M426 155L441 151M300 221L307 222M372 230L360 233M501 90L513 89M304 197L295 203M284 56L290 49M363 96L360 107M42 289L34 273M353 125L340 127M377 205L370 210M38 259L51 262M251 235L243 247M290 85L304 79M382 34L372 29M127 319L124 314M84 311L93 306M336 244L342 242M363 96L343 98M140 274L145 284M76 182L80 174M250 69L256 62M159 273L158 282M74 300L85 293M78 144L67 143M54 159L42 168M279 136L296 128M26 247L20 219M520 65L528 67M205 115L190 112M51 262L44 269M364 116L379 112M65 173L68 166M267 137L255 136M413 37L424 31M164 85L171 83M522 78L537 76M299 148L297 156M130 140L118 144M165 115L162 108M118 321L107 323M86 316L76 324M496 113L506 119M156 240L156 251M348 32L356 27M473 41L483 42M46 275L37 275M153 129L142 128M267 137L259 147M469 83L479 76M254 215L240 216M228 167L241 169M414 73L424 70M205 234L204 243M364 31L357 39M455 115L467 114M351 188L339 190M138 187L151 186M388 69L397 62M122 237L130 234M521 72L522 78M74 202L86 203M494 177L506 174M400 23L408 26M50 170L58 165M317 155L333 155M328 39L321 44M471 74L469 83M388 199L396 193M67 143L61 152M341 194L338 203M417 19L429 14M413 155L410 163M489 144L484 150M493 130L497 124M424 123L435 118M56 241L55 234M66 192L67 185M550 116L555 119M497 124L482 123M347 224L356 224M145 284L158 282M89 135L106 127M479 146L488 138M83 115L98 106M448 145L454 139M209 148L196 156M183 220L190 212M118 321L112 324M532 134L522 139M185 274L192 273M540 118L536 125M426 155L418 149M198 83L199 91M444 134L459 133M429 14L440 13M259 161L249 159M505 104L509 98M315 204L302 209M144 165L126 171M390 47L400 42M31 204L26 211M507 45L505 43M144 99L142 90M296 128L303 119M340 231L356 224M484 150L481 155M104 133L93 142M231 283L234 293M76 121L86 122M457 28L457 22M203 253L214 251M328 235L319 242M414 198L406 208M196 156L183 155M423 196L414 193M517 145L522 139M181 82L171 83M165 186L148 199M452 151L464 151M328 39L318 40M438 184L430 185M395 38L379 48M118 321L117 310M403 161L405 153M367 38L382 34M130 140L148 138M271 121L280 126M171 272L181 270M255 241L264 236M231 283L239 290M324 212L338 203M128 290L137 291M272 270L270 276M407 67L412 57M413 89L419 94M214 124L219 116M393 92L404 90M254 187L243 191M296 128L308 123M418 149L413 155M169 154L183 155M364 164L360 157M254 122L271 121M341 111L338 120M74 300L66 299M243 85L236 92M73 238L70 244M171 236L166 229M307 91L320 88M445 189L435 195M535 109L523 113M428 86L419 94M364 116L360 107M336 184L350 182M94 157L87 163M521 72L531 67M431 18L440 13M152 88L161 86M443 106L426 116M304 79L311 69M395 217L406 208M372 167L368 176M161 86L171 83M496 35L505 43M413 89L404 90M198 265L193 272M205 115L219 116M190 79L222 72M480 118L489 111M551 98L534 98M48 183L38 184M321 249L319 242M190 245L173 250M240 216L251 210M379 112L375 106M505 43L514 51M290 85L274 92M351 237L342 242M231 115L219 116M259 161L257 169M542 112L547 106M129 131L116 132M74 300L80 306M342 242L333 246M31 264L29 256M288 165L285 157M354 193L338 203M86 316L93 306M433 107L414 116M401 32L392 27M489 31L488 28M101 226L106 231M528 107L523 113M419 216L422 205M293 65L303 68M250 203L234 204M252 265L241 272M478 137L471 136M316 51L308 57M117 293L112 288M489 144L504 137M29 256L26 247M88 194L74 202M395 201L388 199M480 97L464 96M271 121L284 118M497 84L479 86M509 85L522 78M274 145L290 137M390 47L407 47M473 41L457 54M42 248L46 240M94 319L85 324M446 67L426 78M112 138L116 132M528 67L531 67M112 213L122 200M505 172L494 177M179 121L190 112M322 141L329 146M217 91L220 84M167 127L153 129M497 135L488 138M58 220L50 232M59 313L57 302M284 239L281 245M209 246L222 242M82 226L73 238M94 319L104 318M493 120L480 118M520 65L515 59M80 241L70 244M193 224L183 220M445 124L444 134M298 240L287 233M346 43L336 46M387 215L372 220M78 144L93 142M374 124L379 112M107 209L94 210M113 170L126 171M380 64L397 62M415 143L405 153M290 137L285 149M243 155L237 147M219 116L200 125M185 106L188 98M254 215L265 216M158 163L168 161M445 189L431 192M279 232L276 239M475 52L483 42M165 115L153 129M300 221L298 216M303 119L300 112M109 295L102 300M119 217L112 224M243 85L240 80M254 215L269 202M263 64L260 61M171 272L158 282M464 151L453 158M393 92L375 97M266 103L264 113M224 78L220 84M241 105L259 99M175 265L159 273M76 182L85 183M279 232L264 242M257 257L254 247M474 31L476 25M304 79L303 68M49 298L56 290M354 193L363 185M236 92L246 92M67 273L76 277M127 115L111 118M446 139L444 134M326 190L320 181M162 141L161 152M78 144L82 152M523 96L526 101M404 82L404 90M542 112L535 109M517 145L511 153M104 203L113 198M161 152L171 147M259 147L249 159M504 137L501 144M372 59L379 48M165 115L185 106M288 264L279 263M107 241L118 243M71 214L65 210M426 78L424 70M281 245L272 253M302 204L302 209M376 159L360 157M364 31L348 32M170 287L166 291M107 280L112 288M400 23L395 20M29 199L21 205M214 141L220 128M310 210L315 204M464 15L455 14M489 144L501 144M314 215L307 222M93 142L94 152M412 176L423 182M35 254L31 250M415 143L434 132M152 102L144 99M488 101L495 95M179 164L199 164M256 62L260 61M244 226L235 223M228 236L213 240M223 154L237 147M146 110L152 102M142 128L148 138M307 234L312 240M118 144L112 138M336 46L321 55M424 31L419 45M87 275L87 284M380 64L388 55M304 231L312 226M355 207L361 202M56 147L47 142M414 193L430 185M104 133L106 127M102 179L90 176M67 263L67 273M78 207L85 209M189 265L193 272M86 122L101 116M410 216L405 213M171 83L180 81M496 113L512 105M372 167L382 165M269 245L265 251M529 117L531 122M57 302L55 314M149 121L153 111M480 97L473 106M267 137L279 136M241 105L253 95M180 81L190 79M173 205L163 213M102 143L94 152M209 211L197 217M42 168L50 170M448 145L441 151M444 38L435 35M468 18L457 22M488 63L479 76M214 141L223 144M259 147L274 145M522 59L531 67M255 241L264 242M78 144L70 148M53 285L68 280M169 154L161 152M323 112L334 105M80 306L86 300M86 300L85 293M274 194L278 203M414 204L422 205M338 41L346 43M401 32L410 31M50 170L37 179M324 251L315 255M298 60L291 51M465 160L464 151M157 115L153 111M103 110L98 106M84 249L90 240M315 62L327 69M181 270L185 274M509 85L501 90M310 200L302 209M48 252L42 248M90 176L100 172M40 233L46 240M312 147L297 156M462 139L460 147M189 80L180 81M445 124L461 122M547 106L551 98M453 79L445 75M423 196L422 205M413 155L419 161M419 161L411 170M20 194L19 188M132 96L135 100M274 194L293 189M141 122L138 115M473 41L475 52M76 182L67 185M76 285L87 275M132 96L120 98M205 234L208 226M343 98L359 90M94 198L104 203M48 252L38 259M358 134L368 134M267 191L252 195M143 260L137 268M208 259L214 262M242 138L252 143M120 98L114 99M81 271L76 277M141 122L149 121M372 29L380 21M259 99L274 92M392 165L382 165M185 106L190 112M538 83L544 84M386 24L380 21M388 55L379 48M51 213L49 225M89 220L82 226M351 188L350 182M336 46L342 49M515 158L511 153M36 227L40 233M550 116L556 113M22 174L27 179M129 241L136 244M515 59L506 63M254 72L240 80M244 226L257 222M151 146L135 146M405 213L395 217M87 260L94 270M248 64L260 61M118 321L125 322M388 55L372 59M533 139L545 139M179 228L173 219M178 195L187 196M524 150L515 158M337 60L328 57M243 155L231 159M110 271L110 263M480 20L505 43M119 110L111 105M339 208L331 219M278 256L290 257M556 113L555 119M241 105L222 109M304 52L301 46M488 101L480 97M280 177L302 170M205 115L205 105M555 119L550 129M281 245L265 251M270 276L259 280M248 282L248 285M543 93L534 98M321 249L315 255M193 224L179 228M65 173L51 176M226 244L214 251M314 171L302 170M22 174L19 184M511 68L506 63M309 131L301 139M259 280L248 285M159 273L171 272M137 291L145 284M316 51L309 45M253 95L246 92M320 208L315 204M226 244L228 236M438 88L453 79M506 63L510 52M148 227L136 228M307 234L317 234M238 99L218 101M426 130L412 134M119 254L104 255M71 214L78 207M99 239L90 240M112 213L107 220M307 234L312 226M71 177L67 185M244 226L240 216M358 182L358 172M170 91L164 85M349 114L353 104M248 282L249 276M135 146L148 138M231 83L217 91M315 62L308 57M278 256L272 253M374 124L368 134M205 234L221 231M368 134L362 127M259 147L252 143M30 165L38 160M107 280L98 280M101 226L88 235M387 123L395 129M431 18L429 14M339 162L348 155M271 121L277 113M494 177L487 179M435 118L426 116M367 38L372 29M523 96L509 98M455 41L463 32M290 257L288 264M428 164L437 157M414 204L414 198M267 191L250 203M438 184L431 192M126 171L145 156M403 161L410 163M355 83L361 75M68 166L74 155M463 32L476 25M182 143L189 131M286 205L285 212M64 236L75 225M303 190L293 189M423 196L414 198M120 248L130 252M200 77L222 72M194 236L208 226M531 67L544 84M339 190L341 194M137 291L125 297M75 269L87 260M269 245L254 247M182 143L177 137M269 245L276 239M376 150L389 140M343 176L350 182M392 158L403 161M221 254L237 242M297 262L297 263M205 115L188 120M126 180L138 187M77 192L85 183M66 192L77 192M56 147L46 146M144 99L135 100M487 47L483 42M134 306L133 312M504 163L489 159M514 109L526 101M267 191L269 202M404 82L413 89M203 189L200 196M388 199L386 208M354 193L352 201M397 62L404 55M520 131L509 145M429 173L433 177M304 231L307 234M180 253L173 250M55 137L54 135M359 90L367 82M285 212L289 216M288 226L298 216M489 159L497 169M347 224L340 231M20 194L33 192M375 97L375 106M260 87L253 78M280 268L279 272M400 178L399 171M117 310L104 318M298 216L289 216M383 191L371 201M459 133L468 129M474 31L463 32M185 181L170 191M528 83L532 90M332 85L327 100M151 146L161 152M150 216L163 213M484 150L470 153M324 212L323 220M314 138L312 147M259 161L241 169M286 205L278 203M231 83L243 85M153 270L145 284M183 220L197 217M461 122L459 133M203 253L209 246M94 210L85 209M76 121L75 128M279 232L287 233M429 173L441 168M177 281L178 281M437 157L441 151M352 201L338 203M43 217L44 211M445 189L449 187M136 228L140 235M104 133L112 138M533 139L522 139M268 265L272 270M259 270L272 270M196 156L210 157M35 214L23 219M270 57L280 53M520 131L532 134M317 155L318 164M414 73L426 78M455 115L473 106M356 147L366 148M115 152L126 147M239 290L248 285M550 129L545 139M65 173L59 179M151 261L166 257M27 223L22 228M64 236L62 248M463 173L457 181M24 230L24 238M103 247L93 253M474 31L488 28M400 42L410 31M58 220L49 225M193 272L205 267M21 205L19 210M203 253L208 259M80 174L76 165M222 72L222 72M46 275L57 271M243 247L254 247M322 141L340 127M281 245L276 239M264 113L257 109M339 208L352 201M45 280L37 275M210 172L222 175M135 109L144 99M119 217L132 213M151 146L136 155M309 131L308 123M376 150L385 153M102 179L106 185M135 317L134 320M74 300L67 309M38 259L29 256M234 69L235 68M515 158L514 165M51 213L63 205M520 65L521 72M310 210L298 216M240 261L241 272M445 17L442 14M393 92L375 106M55 265L57 271M244 116L231 115M104 133L102 143M62 248L56 256M473 160L474 169M76 165L74 155M447 181L438 184M256 62L248 64M254 215L244 226M315 100L300 112M376 150L373 139M198 259L208 259M101 226L107 220M40 233L50 232M528 83L513 89M222 109L219 116M337 60L342 49M361 75L359 66M46 146L47 142M299 105L315 100M293 98L282 96M48 252L51 262M89 220L75 225M413 37L410 31M137 291L153 289M244 116L241 105M471 136L462 139M480 118L496 113M171 236L156 240M127 278L137 268M223 144L237 147M19 184L22 171M141 248L156 240M117 293L113 303M78 207L86 203M474 31L473 41M107 323L99 327M336 32L346 29M214 124L200 125M391 110L406 103M488 101L489 111M338 41L340 31M347 224L340 223M493 130L511 126M419 216L429 207M444 38L457 28M400 23L392 27M497 108L501 98M234 179L241 169M102 179L85 183M145 305L156 306M496 183L487 179M74 300L74 293M480 163L474 169M176 243L194 236M433 107L443 106M342 86L353 74M497 84L501 90M434 166L437 157M330 201L341 194M84 249L95 245M128 106L119 110M343 176L350 164M355 83L359 90M403 161L413 155M111 118L119 110M457 54L475 52M340 231L340 223M423 182L433 177M55 234L46 240M234 197L243 191M141 248L130 252M414 193L431 192M459 83L463 71M318 124L322 132M252 195L234 204M20 194L29 187M380 85L375 97M358 231L360 233M221 185L237 186M205 115L200 125M135 109L146 110M531 122L520 126M254 215L251 210M445 75L463 71M524 150L534 149M400 42L407 47M188 187L203 189M310 210L320 208M234 197L252 195M446 139L459 133M177 281L181 270M222 260L214 262M238 99L246 92M445 75L426 78M509 98L513 89M94 270L98 280M120 98L119 110M290 111L279 103M62 248L72 252M63 200L63 205M426 155L413 155M340 231L342 242M326 190L339 190M307 222L312 226M42 248L36 244M414 116L407 127M444 38L435 46M66 192L57 189M499 59L510 52M538 142L545 139M464 96L456 103M209 148L210 157M203 203L197 217M351 188L363 185M382 34L392 27M389 140L385 153M142 176L158 163M127 192L137 196M135 317L127 319M144 310L135 317M259 161L262 154M264 113L279 103M328 173L343 176M543 93L532 90M481 131L478 137M209 211L222 206M57 189L48 183M83 160L94 152M264 178L267 183M537 76L538 83M399 171L411 170M488 101L501 98M163 265L166 257M356 224L358 231M145 305L154 301M367 54L372 59M166 257L173 250M95 166L100 172M467 114L471 119M333 155L329 146M193 272L206 269M500 41L495 51M488 28L496 35M367 194L352 201M361 75L367 82M231 83L236 92M338 120L329 115M511 68L521 72M298 256L307 256M73 238L75 225M413 37L407 47M341 111L349 114M398 120L387 123M489 159L481 155M117 293L125 297M111 162L104 154M112 138L120 139M257 257L263 263M360 233L351 237M146 110L161 102M336 244L333 246M80 241L72 252M279 103L282 96M388 199L371 201M355 83L367 82M482 123L468 129M121 163L122 156M268 276L272 270M478 58L475 52M392 158L376 159M63 229L55 234M34 273L31 264M456 103L443 106M129 241L130 234M99 239L95 245M306 180L320 181M234 69L224 78M36 227L24 230M189 80L200 77M437 202L422 205M529 117L520 121M322 132L338 120M382 34L386 24M89 220L94 210M37 275L42 289M62 248L56 241M73 238L88 235M198 259L183 259M414 116L426 116M290 257L298 256M462 139L468 129M274 194L269 202M452 151L460 147M285 157L269 160M226 244L237 242M509 145L522 139M266 230L264 236M190 145L196 156M138 187L142 176M279 263L272 270M104 255L110 263M76 285L68 280M386 24L392 27M355 207L351 217M395 20L398 17M156 306L158 303M222 109L231 115M68 166L76 165M355 207L339 208M461 122L471 119M457 54L446 67M150 216L142 214M522 78L508 77M426 155L419 161M465 160L449 173M200 77L210 75M367 38L364 31M480 118L468 129M290 85L292 75M465 160L449 164M183 172L196 176M489 159L482 168M410 31L416 26M81 271L87 260M529 117L535 109M538 76L544 84M312 147L322 141M179 164L196 156M148 227L140 235M185 274L178 281M535 109L534 98M297 262L306 259M461 122L467 114M203 189L199 183M330 201L339 190M392 27L395 20M197 217L212 218M544 84L550 94M183 220L173 219M234 197L227 193M378 77L395 72M504 163L502 153M487 47L475 52M306 259L297 263M103 148L104 154M217 162L231 159M228 167L231 159M34 270L44 269M329 115L334 105M146 110L153 111M507 45L514 51M35 254L29 256M144 99L152 88M258 280L259 280M26 244L26 247M127 192L113 198M297 263L288 268M304 52L291 51M231 283L227 280M275 60L263 64M355 207L360 212M464 151L469 145M445 17L437 24M49 298L42 289M47 292L42 289M199 101L188 98M19 210L18 200M428 164L419 161M222 109L218 101M284 182L296 177M76 121L68 127M278 65L293 65M407 67L395 72M497 84L495 95M183 172L173 178M542 132L549 122M543 93L551 98M144 310L156 306M137 196L124 208M257 169L269 160M86 316L100 308M235 133L242 124M367 194L371 201M382 34L376 41M356 224L360 212M464 96L469 83M448 145L462 139M54 159L58 165M528 107L534 98M480 163L473 160M221 185L203 189M417 103L419 94M364 31L356 27M128 303L136 297M312 240L302 250M90 176L85 183M205 105L218 101M424 59L414 73M136 155L145 156M75 128L68 127M63 200L74 202M260 87L281 80M67 263L57 271M488 63L478 58M285 157L285 149M555 107L542 112M104 255L87 260M94 210L86 203M106 310L104 318M46 240L36 244M76 285L87 284M66 316L62 322M145 284L132 283M130 140L142 128M157 115L149 121M170 191L165 186M175 265L163 265M364 164L358 172M98 280L100 285M113 303L106 310M71 214L58 220M516 54L506 63M353 74L359 66M71 214L69 222M406 194L396 193M304 52L298 60M463 173L465 172M78 207L74 202M452 151L448 145M377 205L386 208M179 121L185 106M488 101L473 106M405 153L396 149M338 94L327 100M268 265L263 263M259 270L263 263M199 183L196 176M93 253L79 255M51 176L48 183M428 86L445 75M300 221L314 215M374 181L377 190M434 166L428 164M82 226L75 225M113 170L100 172M395 81L414 73M95 166L90 176M537 76L544 84M205 105L199 101M247 178L237 186M217 199L209 211M113 170L111 162M190 112L188 120M484 150L490 151M176 104L188 98M414 204L405 213M161 292L170 287M520 131L536 125M455 179L449 187M168 281L170 287M28 238L40 233M198 83L189 80M106 310L94 319M174 97L162 108M55 265L62 259M260 87L268 79M493 130L478 137M86 300L93 306M64 236L70 244M290 111L293 98M109 295L112 288M193 224L197 217M173 178L165 186M461 64L457 54M264 242L254 247M309 45L301 46M264 242L276 239M333 155L328 165M445 26L437 24M473 160L481 155M27 179L19 184M187 88L188 98M103 193L96 189M46 146L40 149M55 234L50 232M285 157L275 169M217 199L222 206M101 226L112 224M337 60L337 67M29 187L38 184M509 145L511 153M459 83L449 89M383 191L380 184M413 89L426 78M498 65L506 63M328 57L321 55M143 260L141 255M392 158L385 153M285 212L272 224M433 177L441 178M279 232L284 222M190 145L183 155M51 176L58 165M107 323L112 324M306 180L296 177M181 82L189 80M438 88L449 89M222 72L235 68M57 189L54 199M428 86L426 78M36 244L26 247M19 184L18 200M239 210L234 204M341 147L333 155M337 60L351 49M526 101L528 107M235 68L248 64M444 38L455 41M364 116L353 125M550 94L555 104M326 226L340 223M194 236L179 228M150 207L132 213M480 163L481 155M199 101L190 112M202 135L204 144M343 98L334 105M254 122L252 130M259 270L268 276M364 116L362 127M437 24L425 23M392 182L380 184M555 104L556 113M288 268L279 272M302 170L318 164M180 253L183 259M279 136L290 137M424 31L437 24M136 155L122 156M474 169L482 168M457 28L476 25M56 147L61 152M196 156L204 144M356 224L372 220M279 272L270 276M170 191L178 195M110 271L125 267M489 159L480 163M523 96L521 90M320 77L311 69M505 104L501 98M511 68L508 77M113 188L106 185M509 98L512 105M22 174L33 172M136 244L130 252M444 38L463 32M356 147L373 139M50 205L44 211M170 91L171 83M490 80L479 76M278 65L275 60M183 259L174 259M266 230L258 229M315 100L327 100M479 86L464 96M144 165L142 176M35 254L42 248M89 220L79 215M259 270L252 265M497 84L490 80M247 178L243 191M162 141L148 138M136 244L140 235M473 106L467 114M80 306L67 309M389 140L400 139M223 154L223 144M446 67L432 62M445 124L449 111M408 26L410 31M153 270L159 273M520 65L511 68M86 122L98 123M319 242L312 240M316 51L304 52M103 110L91 113M177 281L168 281M424 31L425 23M321 44L327 46M95 166L94 157M504 163L505 172M64 158L74 155M94 198L86 203M412 176L428 164M35 254L38 259M495 51L510 52M205 267L206 269M222 242L214 251M293 198L278 203M387 215L380 226M333 76L337 67M328 57L342 49M323 112L327 100M179 121L177 137M276 239L287 233M370 210L386 208M227 280L221 268M367 38L357 39M133 222L130 234M480 163L482 168M222 260L234 254M259 270L258 280M145 305L136 297M293 198L293 189M398 187L408 184M57 302L49 303M298 256L288 264M156 176L173 178M57 302L66 299M299 45L308 42M547 106L555 104M85 293L74 293M423 52L412 57M63 200L54 199M521 72L528 67M354 55L359 66M400 178L392 182M530 152L522 158M424 31L416 26M465 160L453 158M268 79L264 70M470 153L481 155M219 221L235 223M404 82L426 78M450 99L449 89M465 160L465 172M221 268L206 269M497 169L482 168M107 209L122 200M120 98L128 106M320 77L312 84M293 65L292 75M248 282L258 280M342 49L351 49M331 219L323 220M469 145L460 147M221 185L234 179M203 203L209 211M290 111L284 118M417 103L431 98M206 269L192 273M500 76L502 71M198 259L189 265M112 288L100 285M79 215L78 207M189 80L190 79M383 191L388 199M529 117L520 126M254 72L264 70M388 175L380 184M358 134L353 125M44 269L37 275M397 62L395 72M279 232L264 236M252 265L257 257M183 220L179 228M525 156L530 152M284 56L275 60M358 134L362 127M106 127L111 118M435 35L435 46M461 64L475 52M394 101L404 90M322 132L340 127M120 98L123 96M28 238L26 244M455 179L463 173M169 154L171 147M111 162L122 156M66 299L58 296M170 191L161 205M498 65L488 63M350 182L358 172M242 138L252 130M455 14L457 22M86 316L84 311M493 120L506 119M395 20L386 20M303 119L314 109M80 241L84 249M415 143L412 134M363 96L359 90M314 171L318 164M479 113L471 119M59 179L67 185M148 227L163 213M135 109L127 115M97 291L102 300M424 59L443 50M293 98L299 105M38 160L28 164M119 217L124 208M85 183L96 189M352 237L360 233M35 214L44 211M206 168L210 157M45 280L57 271M468 18L464 13M445 124L426 130M447 181L441 178M177 137L171 147M147 315L135 317M221 254L214 262M278 65L264 70M128 303L124 314M29 199L31 204M209 148L204 144M360 107L349 114M532 90L534 98M280 177L288 165M90 228L98 220M304 79L292 75M81 271L75 269M49 298L49 303M76 139L67 143M400 178L411 170M34 270L34 273M22 174L22 171M219 221L212 218M274 145L285 149M319 242L317 234M209 211L212 218M275 213L272 224M383 131L395 129M464 15L457 22M515 117L511 126M357 39L351 49M307 91L299 105M75 128L86 122M438 88L431 98M248 282L239 290M171 236L176 243M266 103L274 92M41 189L33 192M164 252L166 257M34 273L26 247M293 98L279 103M316 51L327 46M275 60L271 57M132 213L133 222M457 54L443 50M354 193L367 194M262 154L269 160M140 274L137 268M301 161L302 170M317 234L326 226M67 263L62 259M374 124L362 127M300 112L284 118M102 179L100 172M515 117L523 113M284 222L289 216M118 226L106 231M350 164L339 168M254 187L252 195M198 83L209 84M455 115L449 111M209 246L204 243M88 194L77 192M314 138L322 132M94 157L94 152M318 40L321 44M501 90L495 95M234 197L217 199M476 25L484 26M338 41L348 32M302 204L304 197M515 158L522 158M65 133L67 143M498 65L499 59M91 113L101 116M231 83L220 84M507 45L510 52M206 168L217 162M461 64L478 58M198 83L200 77M514 109L528 107M28 238L36 227M449 111L443 106M432 142L415 143M494 39L496 35M497 135L493 130M198 265L205 267M127 115L132 122M219 221L240 216M370 47L354 55M297 246L312 240M168 281L181 270M117 310L107 323M317 38L327 35M227 280L241 272M162 108L153 111M414 193L408 184M537 76L538 76M461 64L446 67M405 213L406 208M437 145L448 145M327 35L336 32M392 158L382 165M468 18L476 25M515 165L506 174M376 150L366 148M85 324L85 328M104 255L118 243M446 67L443 58M455 179L457 181M236 231L221 231M502 153L490 151M143 260L156 251M268 276L258 280M506 174L496 183M113 303L102 300M188 187L178 195M192 273L178 281M87 131L76 139M31 250L36 244M47 156L39 154M374 124L383 131M535 109L551 98M432 62L424 70M214 124L220 128M330 201L320 208M110 112L119 110M178 281L166 291M299 148L285 149M423 52L424 59M247 178L257 169M278 256L263 263M228 167L222 175M106 231L99 239M112 213L119 217M51 176L37 179M391 110L379 112M129 241L118 243M89 135L76 139M179 164L169 172M56 290L58 296M199 101L199 91M314 171L328 165M253 78L243 85M30 165L42 168M310 200L304 197M457 28L463 32M322 141L342 137M93 142L89 135M450 99L464 96M452 151L441 151M368 228L372 220M50 232L49 225M103 247L95 245M478 137L488 138M378 173L368 176M190 245L194 236M174 97L170 91M522 78L513 89M397 207L406 208M54 159L64 158M473 41L465 37M37 179L38 184M151 146L148 138M511 126L506 119M423 196L435 195M370 210L371 201M250 69L240 80M448 31L457 22M551 98L555 104M231 115L220 128M445 189L443 195" stroke="#1ff01f" stroke-width="0.9" fill="none"/><path d="M170,235.0 Q310,190 545,105M170,238.60000000000002 Q310,196 545,111M170,242.20000000000005 Q310,202 545,117M170,245.79999999999995 Q310,208 545,123M170,249.39999999999998 Q310,214 545,129M170,253.0 Q310,220 545,135M170,256.6 Q310,226 545,141M170,260.20000000000005 Q310,232 545,147M170,263.79999999999995 Q310,238 545,153" stroke="#1ff01f" stroke-width="0.8" fill="none"/><path d="M142,112 Q9,170 160,235" stroke="#22ff22" stroke-width="2.2" fill="none"/><path d="M133,118 Q52,176 176,229" stroke="#22ff22" stroke-width="2.2" fill="none"/><path d="M148,113 Q75,173 190,225" stroke="#22ff22" stroke-width="2.2" fill="none"/><path d="M160,109 Q98,170 204,219" stroke="#22ff22" stroke-width="2.2" fill="none"/><path d="M212,88 L256,172" stroke="#22ff22" stroke-width="2.2" fill="none"/><path d="M226,79 L270,160" stroke="#22ff22" stroke-width="2.2" fill="none"/><path d="M170,241 Q310,187 460,125" stroke="#22ff22" stroke-width="2.2" fill="none"/><path d="M52,280 Q170,240 320,185" stroke="#22ff22" stroke-width="2.2" fill="none"/><path d="M70,307 Q210,259 430,197" stroke="#22ff22" stroke-width="2.2" fill="none"/><path d="M442,23 Q510,55 532,87" stroke="#22ff22" stroke-width="2.2" fill="none"/><path d="M495,35 Q550,95 520,123" stroke="#22ff22" stroke-width="2.2" fill="none"/><path d="M320,63 L430,107" stroke="#22ff22" stroke-width="2.2" fill="none"/><path d="M340,57 L405,117" stroke="#22ff22" stroke-width="2.2" fill="none"/><path d="M375,50 L350,121" stroke="#22ff22" stroke-width="2.2" fill="none"/><path d="M410,53 L310,113" stroke="#22ff22" stroke-width="2.2" fill="none"/><path d="M430,65 L370,120" stroke="#22ff22" stroke-width="2.2" fill="none"/><path d="M234,293 Q212,247 245,225" stroke="#22ff22" stroke-width="2.2" fill="none"/><path d="M27,172 Q80,118 151,103" stroke="#22ff22" stroke-width="2.2" fill="none"/><path d="M151,103 Q230,83 300,57" stroke="#22ff22" stroke-width="2.2" fill="none"/><ellipse cx="83" cy="278" rx="27" ry="15" transform="rotate(-28 83 278)" fill="none" stroke="#22ff22" stroke-width="2"/><ellipse cx="56" cy="135" rx="14" ry="8" transform="rotate(-35 56 135)" fill="none" stroke="#22ff22" stroke-width="1.5"/><ellipse cx="382" cy="83" rx="82" ry="36" transform="rotate(-16 382 83)" fill="none" stroke="#22ff22" stroke-width="2.6"/><ellipse cx="382" cy="83" rx="74" ry="30" transform="rotate(-16 382 83)" fill="none" stroke="#22ff22" stroke-width="1.4"/></g><polygon points="19,184 22,171 28,164 40,149 54,135 68,125 83,115 98,106 114,99 132,93 152,88 180,81 210,75 235,68 260,61 290,49 317,38 346,29 375,22 398,17 418,15 440,13 464,13 480,20 496,35 514,51 531,67 544,84 555,104 556,113 555,119 550,129 545,139 530,152 515,165 496,183 487,179 475,171 465,172 457,181 449,187 443,195 435,205 429,216 395,225 360,233 315,255 270,276 248,285 234,293 227,280 221,268 206,269 192,273 178,281 166,291 158,303 152,317 125,322 99,327 85,328 72,327 62,322 55,314 49,303 42,289 34,273 26,247 20,219 18,200" fill="none" stroke="#22ff22" stroke-width="3"/><path d="M150,91 Q148,67 155,68 Q163,80 160,88 z" fill="#1a5a2a" stroke="#22ff22" stroke-width="2"/><polygon points="28.3,183.2 31.2,171.0 37.0,164.4 48.6,150.3 62.1,137.2 75.6,127.8 90.1,118.4 104.5,109.9 120.0,103.3 137.4,97.7 156.7,93.0 183.7,86.4 212.6,80.8 236.8,74.2 260.9,67.6 289.8,56.3 315.9,46.0 343.9,37.5 371.8,30.9 394.0,26.2 413.3,24.4 434.6,22.5 457.7,22.5 473.2,29.1 488.6,43.2 506.0,58.2 522.4,73.2 534.9,89.2 545.5,108.0 546.5,116.5 545.5,122.1 540.7,131.5 535.9,140.9 521.4,153.1 507.0,165.4 488.6,182.3 479.9,178.5 468.3,171.0 458.7,171.9 451.0,180.4 443.3,186.0 437.5,193.6 429.8,203.0 424.0,213.3 391.2,221.8 357.4,229.3 314.0,250.0 270.5,269.7 249.3,278.2 235.8,285.7 229.0,273.5 223.2,262.2 208.8,263.1 195.3,266.9 181.7,274.4 170.2,283.8 162.4,295.1 156.7,308.2 130.6,312.9 105.5,317.6 92.0,318.6 79.5,317.6 69.8,312.9 63.0,305.4 57.3,295.1 50.5,281.9 42.8,266.9 35.1,242.4 29.3,216.1 27.3,198.3" fill="none" stroke="#22ff22" stroke-width="1.3" clip-path="url(#carclip)"/></svg><div class="a" style="left:1553px;top:175px;width:362px;height:286px;background:#f0f0f0;border:1px solid #d9d9d9;"></div><div class="t" style="left:1561px;top:180.0px;font-size:15px;color:#3c3c3c;letter-spacing:-0.55px">Objects</div><svg style="left:1861px;top:184px;" width="10" height="6" viewBox="0 0 10 6"><path d="M0 0 H10 L5 5z" fill="#333"/></svg><svg style="left:1879px;top:181px;" width="10" height="13" viewBox="0 0 10 13"><path d="M2 0 H8 M3 0 V7 M7 0 V7 M1 7 H9 M5 7 V13" stroke="#333" stroke-width="1.6" fill="none"/><rect x="3" y="1" width="2" height="6" fill="#333"/></svg><svg style="left:1897px;top:181px;" width="12" height="12" viewBox="0 0 12 12"><path d="M1 1 L11 11 M11 1 L1 11" stroke="#222" stroke-width="2.2"/></svg><div class="a" style="left:1554px;top:200px;width:360px;height:1px;background:#d9d9d9;"></div><div class="a" style="left:1554px;top:229px;width:360px;height:1px;background:#d9d9d9;"></div><svg style="left:1558px;top:206px;" width="18" height="18" viewBox="0 0 18 18"><path d="M14 4 L3 15" stroke="#888" stroke-width="3.2" stroke-linecap="round"/><path d="M14 4 L3 15" stroke="#f4f4f4" stroke-width="1.6" stroke-linecap="round"/><path d="M17 2.5 A3.5 3.5 0 1 1 12.5 1 L13 4 L15.5 5z" fill="#eee" stroke="#888" stroke-width="1"/><path d="M2 2 L9 9" stroke="#999" stroke-width="1.5"/><path d="M9 9 L15 15" stroke="#2a78c8" stroke-width="3.2" stroke-linecap="round"/></svg><svg style="left:1582px;top:206px;" width="18" height="18" viewBox="0 0 18 18"><path d="M2 6 L7 1 L12 6 L7 11z" fill="#c9a820" stroke="#8a7010" stroke-width="0.6"/><path d="M8 10 L12 6 L16 10 L12 14z" fill="#6ac6f0" stroke="#2a86b0" stroke-width="0.6"/><path d="M9 14 L12 11 L15 14 L12 17z" fill="#f08ad8" stroke="#b04a98" stroke-width="0.6"/></svg><svg style="left:1613px;top:206px;" width="18" height="18" viewBox="0 0 18 18"><path d="M2 1 H11 L15 5 V17 H2z" fill="#f6f6f6" stroke="#aaa"/><path d="M7 14 L16 5 L18 7 L9 16 L6 17z" fill="#f0a030" stroke="#a86a10" stroke-width="0.6"/></svg><svg style="left:1639px;top:206px;" width="18" height="18" viewBox="0 0 18 18"><rect x="4" y="2" width="13" height="10" fill="#8fc0f0" stroke="#3a7acc"/><rect x="1" y="6" width="13" height="10" fill="#d8ebfb" stroke="#3a7acc"/><rect x="1" y="6" width="13" height="3" fill="#5a9ae0"/></svg><svg style="left:1670px;top:206px;" width="18" height="18" viewBox="0 0 18 18"><path d="M2 1 H11 L15 5 V17 H2z" fill="#f6f6f6" stroke="#aaa"/><path d="M13 9 L14.3 12 L17.5 12.2 L15 14.2 L15.8 17.5 L13 15.7 L10.2 17.5 L11 14.2 L8.5 12.2 L11.7 12z" fill="#f6c64a" stroke="#d9a020" stroke-width="0.5"/></svg><svg style="left:1695px;top:206px;" width="18" height="18" viewBox="0 0 18 18"><path d="M3 3 L15 15 M15 3 L3 15" stroke="#e01818" stroke-width="3.5"/></svg><svg style="left:1720px;top:206px;" width="18" height="18" viewBox="0 0 18 18"><rect x="1" y="4" width="16" height="10" fill="#fff" stroke="#333" stroke-width="1.2"/><path d="M5 6 V12 M4 6 H6 M4 12 H6" stroke="#333" stroke-width="0.9"/></svg><svg style="left:1745px;top:206px;" width="18" height="18" viewBox="0 0 18 18"><path d="M2 1 H9 L12 4 V13 H2z" fill="#fafafa" stroke="#b8b8b8"/><path d="M6 5 H13 L16 8 V17 H6z" fill="#fff" stroke="#b8b8b8"/><path d="M8 10H14M8 12H14M8 14H14" stroke="#9ab0cf" stroke-width="0.8"/></svg><svg style="left:1769px;top:206px;" width="18" height="18" viewBox="0 0 18 18"><path d="M9 1 L16 8 H12 V17 H6 V8 H2z" fill="#c6c6c6"/></svg><svg style="left:1794px;top:206px;" width="18" height="18" viewBox="0 0 18 18"><path d="M9 17 L16 10 H12 V1 H6 V10 H2z" fill="#c6c6c6"/></svg><svg style="left:1820px;top:206px;" width="18" height="18" viewBox="0 0 18 18"><path d="M6 1 L11 12 M12 1 L7 12" stroke="#777" stroke-width="1.4"/><circle cx="6" cy="14" r="2.6" fill="none" stroke="#1f7ad0" stroke-width="1.6"/><circle cx="12" cy="14" r="2.6" fill="none" stroke="#1f7ad0" stroke-width="1.6"/></svg><svg style="left:1845px;top:206px;" width="18" height="18" viewBox="0 0 18 18"><path d="M2 1 H9 L12 4 V13 H2z" fill="#fafafa" stroke="#b8b8b8"/><path d="M6 5 H13 L16 8 V17 H6z" fill="#fff" stroke="#b8b8b8"/><path d="M8 10H14M8 12H14M8 14H14" stroke="#9ab0cf" stroke-width="0.8"/></svg><svg style="left:1869px;top:206px;" width="18" height="18" viewBox="0 0 18 18"><rect x="2" y="2" width="11" height="14" fill="#d8d8d8" stroke="#bbb"/><rect x="5" y="1" width="5" height="3" fill="#ccc" stroke="#aaa"/><path d="M7 6 H14 L17 9 V17 H7z" fill="#f0f0f0" stroke="#c8c8c8"/></svg><div class="a" style="left:1608px;top:205px;width:1px;height:20px;background:#d4d4d4;"></div><div class="a" style="left:1664px;top:205px;width:1px;height:20px;background:#d4d4d4;"></div><div class="a" style="left:1554px;top:230px;width:360px;height:230px;background:#ffffff;"></div><div class="a" style="left:1563px;top:314px;width:351px;height:21px;background:#ebebeb;"></div><svg style="left:1561px;top:236px;" width="9" height="9" viewBox="0 0 9 9"><rect x="0.5" y="0.5" width="8" height="8" fill="#fff" stroke="#7a7a7a"/><path d="M2 4.5 H7" stroke="#000"/></svg><svg style="left:1578px;top:232px;" width="16" height="16" viewBox="0 0 16 16"><path d="M2.5 5 H5.5 A2.4 2.4 0 1 1 9.5 5 H12.5 V8 A2.4 2.4 0 1 1 12.5 12 V14.5 H9.5 A2.4 2.4 0 1 0 5.5 14.5 H2.5 V12 A2.4 2.4 0 1 0 2.5 8 z" fill="#fad65a" stroke="#e0a030" stroke-width="1.1"/></svg><div class="t" style="left:1599px;top:233.5px;font-size:13px;color:#101010;letter-spacing:-0.1px">'Root' - Import3D</div><svg style="left:1580px;top:257px;" width="9" height="9" viewBox="0 0 9 9"><rect x="0.5" y="0.5" width="8" height="8" fill="#fff" stroke="#7a7a7a"/><path d="M2 4.5 H7" stroke="#000"/><path d="M4.5 2 V7" stroke="#000"/></svg><svg style="left:1597px;top:253px;" width="16" height="16" viewBox="0 0 16 16"><path d="M2.5 5 H5.5 A2.4 2.4 0 1 1 9.5 5 H12.5 V8 A2.4 2.4 0 1 1 12.5 12 V14.5 H9.5 A2.4 2.4 0 1 0 5.5 14.5 H2.5 V12 A2.4 2.4 0 1 0 2.5 8 z" fill="#fad65a" stroke="#e0a030" stroke-width="1.1"/></svg><div class="t" style="left:1618px;top:254.5px;font-size:13px;color:#101010;letter-spacing:-0.1px">Materials - Component</div><svg style="left:1580px;top:278px;" width="9" height="9" viewBox="0 0 9 9"><rect x="0.5" y="0.5" width="8" height="8" fill="#fff" stroke="#7a7a7a"/><path d="M2 4.5 H7" stroke="#000"/></svg><svg style="left:1597px;top:274px;" width="16" height="16" viewBox="0 0 16 16"><path d="M2.5 5 H5.5 A2.4 2.4 0 1 1 9.5 5 H12.5 V8 A2.4 2.4 0 1 1 12.5 12 V14.5 H9.5 A2.4 2.4 0 1 0 5.5 14.5 H2.5 V12 A2.4 2.4 0 1 0 2.5 8 z" fill="#fad65a" stroke="#e0a030" stroke-width="1.1"/></svg><div class="t" style="left:1618px;top:275.5px;font-size:13px;color:#101010;letter-spacing:-0.1px">Mesh - Mesh</div><svg style="left:1599px;top:299px;" width="9" height="9" viewBox="0 0 9 9"><rect x="0.5" y="0.5" width="8" height="8" fill="#fff" stroke="#7a7a7a"/><path d="M2 4.5 H7" stroke="#000"/></svg><svg style="left:1616px;top:295px;" width="16" height="16" viewBox="0 0 16 16"><path d="M2.5 5 H5.5 A2.4 2.4 0 1 1 9.5 5 H12.5 V8 A2.4 2.4 0 1 1 12.5 12 V14.5 H9.5 A2.4 2.4 0 1 0 5.5 14.5 H2.5 V12 A2.4 2.4 0 1 0 2.5 8 z" fill="#fad65a" stroke="#e0a030" stroke-width="1.1"/></svg><div class="t" style="left:1637px;top:296.5px;font-size:13px;color:#101010;letter-spacing:-0.1px">Geometry - MeshGeometry</div><svg style="left:1635px;top:316px;" width="16" height="16" viewBox="0 0 16 16"><path d="M2.5 5 H5.5 A2.4 2.4 0 1 1 9.5 5 H12.5 V8 A2.4 2.4 0 1 1 12.5 12 V14.5 H9.5 A2.4 2.4 0 1 0 5.5 14.5 H2.5 V12 A2.4 2.4 0 1 0 2.5 8 z" fill="#fad65a" stroke="#e0a030" stroke-width="1.1"/></svg><div class="t" style="left:1656px;top:317.5px;font-size:13px;color:#101010;letter-spacing:-0.1px">Material - MultiMaterial</div><svg style="left:1599px;top:341px;" width="9" height="9" viewBox="0 0 9 9"><rect x="0.5" y="0.5" width="8" height="8" fill="#fff" stroke="#7a7a7a"/><path d="M2 4.5 H7" stroke="#000"/></svg><svg style="left:1616px;top:337px;" width="16" height="16" viewBox="0 0 16 16"><path d="M2.5 5 H5.5 A2.4 2.4 0 1 1 9.5 5 H12.5 V8 A2.4 2.4 0 1 1 12.5 12 V14.5 H9.5 A2.4 2.4 0 1 0 5.5 14.5 H2.5 V12 A2.4 2.4 0 1 0 2.5 8 z" fill="#fad65a" stroke="#e0a030" stroke-width="1.1"/></svg><div class="t" style="left:1637px;top:338.5px;font-size:13px;color:#101010;letter-spacing:-0.1px">LOD 1 - MeshLevelOfDetail</div><svg style="left:1599px;top:362px;" width="9" height="9" viewBox="0 0 9 9"><rect x="0.5" y="0.5" width="8" height="8" fill="#fff" stroke="#7a7a7a"/><path d="M2 4.5 H7" stroke="#000"/><path d="M4.5 2 V7" stroke="#000"/></svg><svg style="left:1616px;top:358px;" width="16" height="16" viewBox="0 0 16 16"><path d="M2.5 5 H5.5 A2.4 2.4 0 1 1 9.5 5 H12.5 V8 A2.4 2.4 0 1 1 12.5 12 V14.5 H9.5 A2.4 2.4 0 1 0 5.5 14.5 H2.5 V12 A2.4 2.4 0 1 0 2.5 8 z" fill="#fad65a" stroke="#e0a030" stroke-width="1.1"/></svg><div class="t" style="left:1637px;top:359.5px;font-size:13px;color:#101010;letter-spacing:-0.1px">LOD 2 - MeshLevelOfDetail</div><svg style="left:1599px;top:383px;" width="9" height="9" viewBox="0 0 9 9"><rect x="0.5" y="0.5" width="8" height="8" fill="#fff" stroke="#7a7a7a"/><path d="M2 4.5 H7" stroke="#000"/><path d="M4.5 2 V7" stroke="#000"/></svg><svg style="left:1616px;top:379px;" width="16" height="16" viewBox="0 0 16 16"><path d="M2.5 5 H5.5 A2.4 2.4 0 1 1 9.5 5 H12.5 V8 A2.4 2.4 0 1 1 12.5 12 V14.5 H9.5 A2.4 2.4 0 1 0 5.5 14.5 H2.5 V12 A2.4 2.4 0 1 0 2.5 8 z" fill="#fad65a" stroke="#e0a030" stroke-width="1.1"/></svg><div class="t" style="left:1637px;top:380.5px;font-size:13px;color:#101010;letter-spacing:-0.1px">LOD 3 - MeshLevelOfDetail</div><svg style="left:1599px;top:404px;" width="9" height="9" viewBox="0 0 9 9"><rect x="0.5" y="0.5" width="8" height="8" fill="#fff" stroke="#7a7a7a"/><path d="M2 4.5 H7" stroke="#000"/><path d="M4.5 2 V7" stroke="#000"/></svg><svg style="left:1616px;top:400px;" width="16" height="16" viewBox="0 0 16 16"><path d="M2.5 5 H5.5 A2.4 2.4 0 1 1 9.5 5 H12.5 V8 A2.4 2.4 0 1 1 12.5 12 V14.5 H9.5 A2.4 2.4 0 1 0 5.5 14.5 H2.5 V12 A2.4 2.4 0 1 0 2.5 8 z" fill="#fad65a" stroke="#e0a030" stroke-width="1.1"/></svg><div class="t" style="left:1637px;top:401.5px;font-size:13px;color:#101010;letter-spacing:-0.1px">Collision Definition - RigidBody</div><div class="a" style="left:1557px;top:262px;width:282px;height:86px;border:5px solid #ff0000"></div><div class="a" style="left:1553px;top:466px;width:362px;height:580px;background:#f0f0f0;border:1px solid #d9d9d9;"></div><div class="t" style="left:1560px;top:471.0px;font-size:15px;color:#3c3c3c;letter-spacing:-0.55px">Settings</div><svg style="left:1861px;top:475px;" width="10" height="6" viewBox="0 0 10 6"><path d="M0 0 H10 L5 5z" fill="#333"/></svg><svg style="left:1879px;top:472px;" width="10" height="13" viewBox="0 0 10 13"><path d="M2 0 H8 M3 0 V7 M7 0 V7 M1 7 H9 M5 7 V13" stroke="#333" stroke-width="1.6" fill="none"/><rect x="3" y="1" width="2" height="6" fill="#333"/></svg><svg style="left:1897px;top:472px;" width="12" height="12" viewBox="0 0 12 12"><path d="M1 1 L11 11 M11 1 L1 11" stroke="#222" stroke-width="2.2"/></svg><div class="a" style="left:1554px;top:491px;width:360px;height:1px;background:#d9d9d9;"></div><div class="t" style="left:1562px;top:501.5px;font-size:15px;color:#000;"><b>Material</b></div><div class="t" style="left:1562px;top:525.0px;font-size:14px;color:#101010;letter-spacing:-0.2px">MultiMaterial</div><svg style="left:1885px;top:499px;" width="18" height="18" viewBox="0 0 18 18"><path d="M2 6 L7 1 L12 6 L7 11z" fill="#c9a820" stroke="#8a7010" stroke-width="0.6"/><path d="M8 10 L12 6 L16 10 L12 14z" fill="#6ac6f0" stroke="#2a86b0" stroke-width="0.6"/><path d="M9 14 L12 11 L15 14 L12 17z" fill="#f08ad8" stroke="#b04a98" stroke-width="0.6"/></svg><div class="a" style="left:1559px;top:553px;width:24px;height:25px;background:#d0d0d0;"></div><svg style="left:1563px;top:558px;" width="16" height="14" viewBox="0 0 16 14"><rect x="0.5" y="2.5" width="15" height="11" fill="#eaf2fb" stroke="#3a7acc"/><rect x="1" y="3" width="14" height="2" fill="#8ab4e6"/><path d="M3 7H5M3 9H5M3 11H5" stroke="#c04040"/><path d="M6 6 Q10 2 15 4 L13 8z" fill="#e8a860"/></svg><svg style="left:1589px;top:557px;" width="14" height="17" viewBox="0 0 14 17"><path d="M8 0 L1 10 H6 L4 17 L13 6 H8z" fill="#f5c830" stroke="#c89a10" stroke-width="0.6"/></svg><div class="a" style="left:1558px;top:582px;width:332px;height:21px;background:#a9a9a9;"></div><div class="t" style="left:1562px;top:585.5px;font-size:15px;color:#101010;letter-spacing:-0.3px">Multi Material</div><svg style="left:1894px;top:585px;" width="12" height="8" viewBox="0 0 12 8"><path d="M1 7 L6 2 L11 7" stroke="#555" stroke-width="1.6" fill="none"/></svg><div class="a" style="left:1555px;top:604px;width:359px;height:379px;overflow:hidden"><div class="a" style="left:154px;top:0px;width:6px;height:380px;background:#dcdcdc;"></div><div class="a" style="left:5px;top:7px;width:17px;height:17px;background:#ffffff;border:1px solid #a0a0a0;"></div><div class="a" style="left:11px;top:15px;width:5px;height:1px;background:#222;"></div><div class="t" style="left:28px;top:9.0px;font-size:14px;color:#101010;">Materials</div><div class="a" style="left:165px;top:13px;width:5px;height:5px;border-radius:50%;background:#000"></div><div class="t" style="left:211px;top:9.0px;font-size:14px;color:#101010;">Count: 11</div><div class="t" style="left:28px;top:37.0px;font-size:14px;color:#101010;">Count</div><div class="a" style="left:207px;top:32px;width:126px;height:22px;background:#ffffff;border:1px solid #d4d4d4;"></div><div class="t" style="left:211px;top:36.0px;font-size:14px;color:#101010;">11</div><div class="t" style="left:27px;top:65.0px;font-size:14px;color:#101010;">0</div><div class="a" style="left:165px;top:68px;width:5px;height:5px;border-radius:50%;background:#000"></div><div class="a" style="left:177px;top:60px;width:27px;height:22px;background:#f4f4f4;border:1px solid #c4c4c4;"></div><svg style="left:189px;top:67px" width="5" height="9"><path d="M0 0 L5 4.5 L0 9z" fill="#000"/></svg><div class="t" style="left:211px;top:66.0px;font-size:14px;color:#101010;">engine</div><div class="t" style="left:27px;top:93.0px;font-size:14px;color:#101010;">1</div><div class="a" style="left:165px;top:96px;width:5px;height:5px;border-radius:50%;background:#000"></div><div class="a" style="left:177px;top:88px;width:27px;height:22px;background:#f4f4f4;border:1px solid #c4c4c4;"></div><svg style="left:189px;top:95px" width="5" height="9"><path d="M0 0 L5 4.5 L0 9z" fill="#000"/></svg><div class="t" style="left:211px;top:94.0px;font-size:14px;color:#101010;">light</div><div class="t" style="left:27px;top:121.0px;font-size:14px;color:#101010;">2</div><div class="a" style="left:165px;top:124px;width:5px;height:5px;border-radius:50%;background:#000"></div><div class="a" style="left:177px;top:116px;width:27px;height:22px;background:#f4f4f4;border:1px solid #c4c4c4;"></div><svg style="left:189px;top:123px" width="5" height="9"><path d="M0 0 L5 4.5 L0 9z" fill="#000"/></svg><div class="t" style="left:211px;top:122.0px;font-size:14px;color:#101010;">chassis</div><div class="t" style="left:27px;top:149.0px;font-size:14px;color:#101010;">3</div><div class="a" style="left:165px;top:152px;width:5px;height:5px;border-radius:50%;background:#000"></div><div class="a" style="left:177px;top:144px;width:27px;height:22px;background:#f4f4f4;border:1px solid #c4c4c4;"></div><svg style="left:189px;top:151px" width="5" height="9"><path d="M0 0 L5 4.5 L0 9z" fill="#000"/></svg><div class="t" style="left:211px;top:150.0px;font-size:14px;color:#101010;">frames</div><div class="t" style="left:27px;top:177.0px;font-size:14px;color:#101010;">4</div><div class="a" style="left:165px;top:180px;width:5px;height:5px;border-radius:50%;background:#000"></div><div class="a" style="left:177px;top:172px;width:27px;height:22px;background:#f4f4f4;border:1px solid #c4c4c4;"></div><svg style="left:189px;top:179px" width="5" height="9"><path d="M0 0 L5 4.5 L0 9z" fill="#000"/></svg><div class="t" style="left:211px;top:178.0px;font-size:14px;color:#101010;">plastic</div><div class="t" style="left:27px;top:205.0px;font-size:14px;color:#101010;">5</div><div class="a" style="left:165px;top:208px;width:5px;height:5px;border-radius:50%;background:#000"></div><div class="a" style="left:177px;top:200px;width:27px;height:22px;background:#f4f4f4;border:1px solid #c4c4c4;"></div><svg style="left:189px;top:207px" width="5" height="9"><path d="M0 0 L5 4.5 L0 9z" fill="#000"/></svg><div class="t" style="left:211px;top:206.0px;font-size:14px;color:#101010;">body</div><div class="t" style="left:27px;top:233.0px;font-size:14px;color:#101010;">6</div><div class="a" style="left:165px;top:236px;width:5px;height:5px;border-radius:50%;background:#000"></div><div class="a" style="left:177px;top:228px;width:27px;height:22px;background:#f4f4f4;border:1px solid #c4c4c4;"></div><svg style="left:189px;top:235px" width="5" height="9"><path d="M0 0 L5 4.5 L0 9z" fill="#000"/></svg><div class="t" style="left:211px;top:234.0px;font-size:14px;color:#101010;">glass</div><div class="t" style="left:27px;top:261.0px;font-size:14px;color:#101010;">7</div><div class="a" style="left:165px;top:264px;width:5px;height:5px;border-radius:50%;background:#000"></div><div class="a" style="left:177px;top:256px;width:27px;height:22px;background:#f4f4f4;border:1px solid #c4c4c4;"></div><svg style="left:189px;top:263px" width="5" height="9"><path d="M0 0 L5 4.5 L0 9z" fill="#000"/></svg><div class="t" style="left:211px;top:262.0px;font-size:14px;color:#101010;">interior</div><div class="t" style="left:27px;top:289.0px;font-size:14px;color:#101010;">8</div><div class="a" style="left:165px;top:292px;width:5px;height:5px;border-radius:50%;background:#000"></div><div class="a" style="left:177px;top:284px;width:27px;height:22px;background:#f4f4f4;border:1px solid #c4c4c4;"></div><svg style="left:189px;top:291px" width="5" height="9"><path d="M0 0 L5 4.5 L0 9z" fill="#000"/></svg><div class="t" style="left:211px;top:290.0px;font-size:14px;color:#101010;">plastic matte</div><div class="t" style="left:27px;top:317.0px;font-size:14px;color:#101010;">9</div><div class="a" style="left:165px;top:320px;width:5px;height:5px;border-radius:50%;background:#000"></div><div class="a" style="left:177px;top:312px;width:27px;height:22px;background:#f4f4f4;border:1px solid #c4c4c4;"></div><svg style="left:189px;top:319px" width="5" height="9"><path d="M0 0 L5 4.5 L0 9z" fill="#000"/></svg><div class="t" style="left:211px;top:318.0px;font-size:14px;color:#101010;">chrome</div><div class="t" style="left:27px;top:345.0px;font-size:14px;color:#101010;">10</div><div class="a" style="left:165px;top:348px;width:5px;height:5px;border-radius:50%;background:#000"></div><div class="a" style="left:177px;top:340px;width:27px;height:22px;background:#f4f4f4;border:1px solid #c4c4c4;"></div><svg style="left:189px;top:347px" width="5" height="9"><path d="M0 0 L5 4.5 L0 9z" fill="#000"/></svg><div class="t" style="left:211px;top:346.0px;font-size:14px;color:#101010;">stwheel</div><div class="t" style="left:28px;top:375.0px;font-size:14px;color:#101010;">Material Index</div><div class="a" style="left:177px;top:368px;width:27px;height:22px;background:#f4f4f4;border:1px solid #c4c4c4;"></div><div class="a" style="left:208px;top:368px;width:125px;height:22px;background:#ffffff;border:1px solid #d4d4d4;"></div><div class="t" style="left:212px;top:374.0px;font-size:14px;color:#101010;">0</div><div class="a" style="left:336px;top:108px;width:19px;height:240px;background:#cdcdcd;"></div></div><svg style="left:1894px;top:971px;" width="12" height="8" viewBox="0 0 12 8"><path d="M1 1 L6 6 L11 1" stroke="#555" stroke-width="1.6" fill="none"/></svg><div class="a" style="left:1565px;top:993px;width:117px;height:32px;background:#fdfdfd;border:1px solid #adadad;"></div><div class="t" style="left:1622px;top:1001.5px;font-size:15px;color:#202020;transform:translateX(-50%);">Update</div><div class="a" style="left:1688px;top:1001px;width:16px;height:16px;background:#ffffff;border:1px solid #404040;"></div><svg style="left:1690px;top:1003px;" width="12" height="12" viewBox="0 0 12 12"><path d="M1.5 6 L4.5 9.5 L10.5 2" stroke="#222" stroke-width="1.8" fill="none"/></svg><div class="t" style="left:1710px;top:1001.5px;font-size:15px;color:#202020;letter-spacing:-0.3px">Auto update</div></body></html>
